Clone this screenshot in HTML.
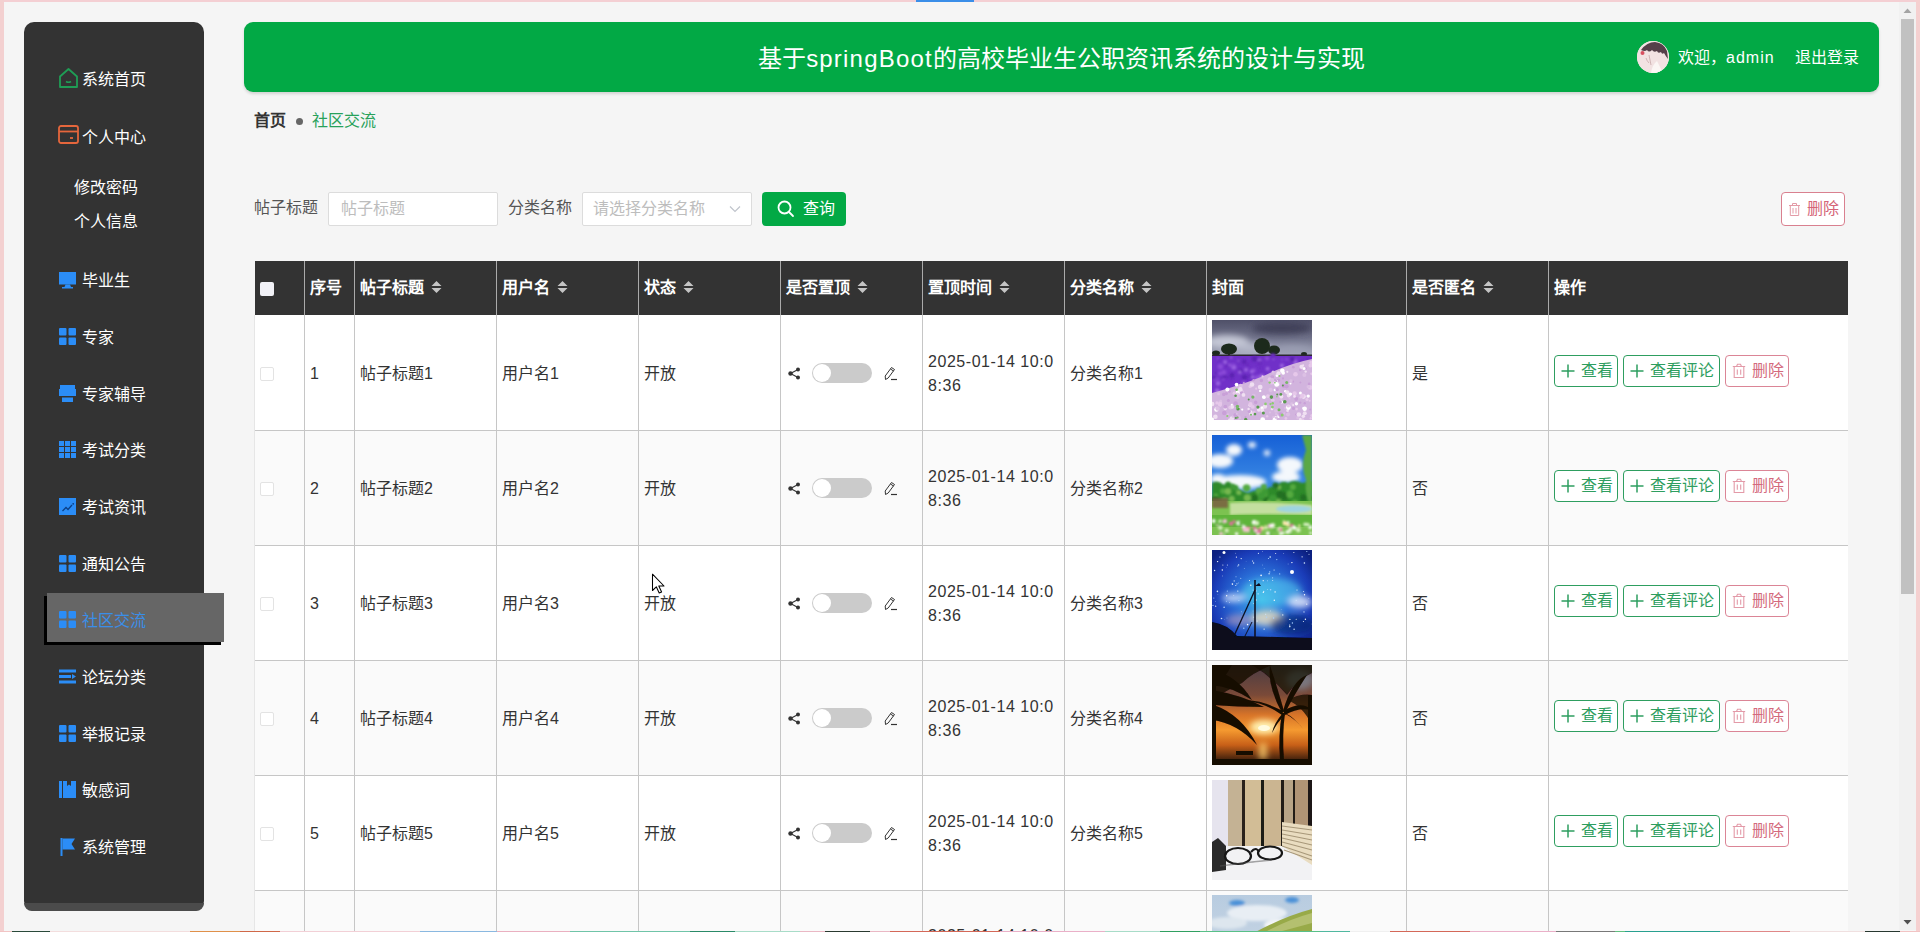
<!DOCTYPE html>
<html lang="zh-CN"><head><meta charset="utf-8">
<style>
*{box-sizing:border-box;margin:0;padding:0}
html,body{width:1920px;height:932px;overflow:hidden}
body{background:#f5f5f5;font-family:"Liberation Sans",sans-serif;font-size:16px;color:#333;position:relative}
.abs{position:absolute}
.frame-t{left:0;top:0;width:1920px;height:2px;background:#f4cfd3}
.frame-l{left:0;top:0;width:4px;height:932px;background:#f3d0d0}
.frame-r{left:1916px;top:0;width:4px;height:932px;background:#f5d0d0}
.frame-b{left:0;top:931px;width:1920px;height:1px;background:linear-gradient(to right,#f2c4c4 0px,#f2c4c4 12px,#2a4a3a 12px,#2a4a3a 50px,#f3dede 50px,#f3dede 190px,#e0904a 190px,#e0904a 240px,#d06848 240px,#d06848 280px,#f2d0d6 280px,#f2d0d6 420px,#8ab8e0 420px,#8ab8e0 497px,#eab0c0 497px,#eab0c0 570px,#70c4a8 570px,#70c4a8 690px,#2a8a68 690px,#2a8a68 735px,#a8dcc8 735px,#a8dcc8 800px,#eab8c4 800px,#eab8c4 825px,#2a3a30 825px,#2a3a30 870px,#eab8c4 870px,#eab8c4 890px,#d46858 890px,#d46858 1000px,#eab0c8 1000px,#eab0c8 1105px,#a8dcc8 1105px,#a8dcc8 1160px,#30a060 1160px,#30a060 1200px,#58c088 1200px,#58c088 1320px,#50b8a0 1320px,#50b8a0 1350px,#f0f0f0 1350px,#f0f0f0 1390px,#d46858 1390px,#d46858 1470px,#eab0c8 1470px,#eab0c8 1556px,#787878 1556px,#787878 1615px,#60c080 1615px,#60c080 1625px,#28a090 1625px,#28a090 1720px,#e08888 1720px,#e08888 1790px,#f0e0e0 1790px,#f0e0e0 1865px,#283830 1865px,#283830 1900px,#f2c4c4 1900px,#f2c4c4 1920px)}
#side{left:24px;top:22px;width:180px;height:889px;background:#333;border-radius:10px}
#side .bot{position:absolute;left:0;bottom:0;width:180px;height:8px;background:#4b4b4b;border-radius:0 0 10px 10px}
.mi{position:absolute;left:0;height:24px;line-height:24px;color:#fff;font-size:16px;white-space:nowrap}
.mi .ic{position:absolute;left:35px;top:3px;width:18px;height:18px}
.mi .tx{position:absolute;left:58px;top:1px}
.sub{position:absolute;left:50px;height:24px;line-height:24px;padding-top:1px;font-weight:500;color:#fff;font-size:16px;white-space:nowrap}
#active{left:23px;top:571px;width:177px;height:49px;background:#666;box-shadow:-3px 3px 0 #000}
#hdr{left:244px;top:22px;width:1635px;height:70px;background:#02a945;border-radius:9px;box-shadow:0 2px 3px rgba(0,0,0,.14)}
#hdr .title{position:absolute;left:0;width:1635px;top:2px;height:70px;line-height:70px;text-align:center;color:#fff;font-size:24px}

.avatar{left:1637px;top:41px;width:32px;height:32px;border-radius:50%;overflow:hidden;background:#f1e3e3}
.hw{left:1678px;top:46px;height:24px;line-height:24px;color:#fff;font-size:16px;white-space:nowrap}
.bc{top:109px;height:24px;line-height:24px;font-size:16px;white-space:nowrap}
.lbl{top:196px;height:24px;line-height:24px;font-size:16px;color:#555;white-space:nowrap}
.inp{top:192px;height:34px;background:#fff;border:1px solid #dcdcdc;border-radius:2px}
.ph{position:absolute;left:12px;top:4px;height:24px;line-height:24px;color:#bdbdbd;font-size:16px;white-space:nowrap}
.btn-q{left:762px;top:192px;width:84px;height:34px;background:#02a945;border-radius:4px;color:#fff}
.btn-d{left:1781px;top:192px;width:64px;height:34px;background:#fff;border:1px solid #d9808f;border-radius:4px;color:#d56477}
/*TCSS*/

.th{position:absolute;top:0;height:54px;line-height:54px;color:#fff;font-weight:bold;font-size:16px;white-space:nowrap}
.td{position:absolute;height:24px;line-height:24px;padding-top:1px;color:#333;font-size:16px;white-space:nowrap}
.sort{display:inline-block;vertical-align:top;margin-left:7px;margin-top:19px;width:11px;height:14px}
.ob{position:absolute;height:32px;border:1px solid #2e9e60;border-radius:4px;background:#fff;color:#2e9e60;font-size:16px;line-height:30px;white-space:nowrap}
.ob.del{border-color:#db8596;color:#d46a7d}

/*/TCSS*/
</style></head><body>
<div class="abs frame-t"></div>
<div class="abs frame-l"></div>
<div class="abs frame-r"></div>

<div id="side" class="abs">
  <div class="bot"></div>
<div id="active" class="abs"></div>
<div class="mi" style="top:45px"><svg class="ic" style="left:34px;top:0px;width:21px;height:22px" viewBox="0 0 21 22"><path d="M2 9.5 L10.5 2 L19 9.5 V20 H2 Z" fill="none" stroke="#1f9d55" stroke-width="1.8" stroke-linejoin="round"/><path d="M8 14.5 Q10.5 16 13 14.5" fill="none" stroke="#1f9d55" stroke-width="1.5"/></svg><span class="tx">系统首页</span></div>
<div class="mi" style="top:103px"><svg class="ic" style="left:34px;top:0px;width:21px;height:19px" viewBox="0 0 21 19"><rect x="1" y="1" width="19" height="17" rx="2" fill="none" stroke="#e5663c" stroke-width="1.8"/><path d="M1 6.5 H20" stroke="#e5663c" stroke-width="1.8"/><path d="M12 13 H15" stroke="#e5663c" stroke-width="1.8"/></svg><span class="tx">个人中心</span></div>
<div class="mi" style="top:246px"><svg class="ic" viewBox="0 0 18 18"><rect x="0" y="1" width="17" height="12.5" fill="#2b8df7"/><path d="M6.5 13.5 L5.5 16 H12 L11 13.5Z" fill="#2b8df7"/><rect x="3" y="16" width="11" height="1.5" fill="#2b8df7"/></svg><span class="tx">毕业生</span></div>
<div class="mi" style="top:303px"><svg class="ic" viewBox="0 0 18 18"><rect x="0" y="0" width="7.5" height="7.5" rx="1" fill="#2b8df7"/><rect x="9.5" y="0" width="7.5" height="7.5" rx="1" fill="#2b8df7"/><rect x="0" y="9.5" width="7.5" height="7.5" rx="1" fill="#2b8df7"/><rect x="9.5" y="9.5" width="7.5" height="7.5" rx="1" fill="#2b8df7"/></svg><span class="tx">专家</span></div>
<div class="mi" style="top:360px"><svg class="ic" viewBox="0 0 18 18"><path d="M1 0 H16 V11 H1Z" fill="#2b8df7"/><path d="M0 4 H17 V11 H0Z" fill="#2b8df7"/><rect x="3" y="12.5" width="11" height="4.5" fill="#2b8df7"/></svg><span class="tx">专家辅导</span></div>
<div class="mi" style="top:416px"><svg class="ic" viewBox="0 0 18 18"><g fill="#2b8df7"><rect x="0" y="0" width="5" height="5"/><rect x="6" y="0" width="5" height="5"/><rect x="12" y="0" width="5" height="5"/><rect x="0" y="6" width="5" height="5"/><rect x="6" y="6" width="5" height="5"/><rect x="12" y="6" width="5" height="5"/><rect x="0" y="12" width="5" height="5"/><rect x="6" y="12" width="5" height="5"/><rect x="12" y="12" width="5" height="5"/></g></svg><span class="tx">考试分类</span></div>
<div class="mi" style="top:473px"><svg class="ic" viewBox="0 0 18 18"><rect x="0" y="0" width="17" height="17" fill="#2b8df7"/><path d="M3.5 13 L7 9.5 L9 11.5 L13 7" fill="none" stroke="#0b3f86" stroke-width="1.3"/><circle cx="14.2" cy="5.8" r=".9" fill="#0b3f86"/></svg><span class="tx">考试资讯</span></div>
<div class="mi" style="top:530px"><svg class="ic" viewBox="0 0 18 18"><rect x="0" y="0" width="7.5" height="7.5" rx="1" fill="#2b8df7"/><rect x="9.5" y="0" width="7.5" height="7.5" rx="1" fill="#2b8df7"/><rect x="0" y="9.5" width="7.5" height="7.5" rx="1" fill="#2b8df7"/><rect x="9.5" y="9.5" width="7.5" height="7.5" rx="1" fill="#2b8df7"/></svg><span class="tx">通知公告</span></div>
<div class="mi" style="top:586px;color:#3a8ee8"><svg class="ic" viewBox="0 0 18 18"><rect x="0" y="0" width="7.5" height="7.5" rx="1" fill="#2b8df7"/><rect x="9.5" y="0" width="7.5" height="7.5" rx="1" fill="#2b8df7"/><rect x="0" y="9.5" width="7.5" height="7.5" rx="1" fill="#2b8df7"/><rect x="9.5" y="9.5" width="7.5" height="7.5" rx="1" fill="#2b8df7"/></svg><span class="tx">社区交流</span></div>
<div class="mi" style="top:643px"><svg class="ic" viewBox="0 0 18 18"><g fill="#2b8df7"><rect x="0" y="1.5" width="17" height="3"/><rect x="0" y="7" width="12" height="3"/><path d="M13 6 L17 8.5 L13 11Z"/><rect x="0" y="12.5" width="17" height="3"/></g></svg><span class="tx">论坛分类</span></div>
<div class="mi" style="top:700px"><svg class="ic" viewBox="0 0 18 18"><rect x="0" y="0" width="7.5" height="7.5" rx="1" fill="#2b8df7"/><rect x="9.5" y="0" width="7.5" height="7.5" rx="1" fill="#2b8df7"/><rect x="0" y="9.5" width="7.5" height="7.5" rx="1" fill="#2b8df7"/><rect x="9.5" y="9.5" width="7.5" height="7.5" rx="1" fill="#2b8df7"/></svg><span class="tx">举报记录</span></div>
<div class="mi" style="top:756px"><svg class="ic" viewBox="0 0 18 18"><g fill="#2b8df7"><rect x="0" y="0" width="3" height="17"/><path d="M4 0 H8 V5 L10 3.5 L12 5 V0 H17 V17 H4Z"/></g></svg><span class="tx">敏感词</span></div>
<div class="mi" style="top:813px"><svg class="ic" viewBox="0 0 18 18"><g fill="#2b8df7"><rect x="1.5" y="0" width="2" height="19"/><path d="M3.5 0.5 H16 L12.5 6 L16 11.5 H3.5Z"/></g></svg><span class="tx">系统管理</span></div>
<div class="sub" style="top:153px">修改密码</div>
<div class="sub" style="top:187px">个人信息</div>
</div>

<div id="hdr" class="abs">
  <div class="title">基于<span style="letter-spacing:1.2px">springBoot</span>的高校毕业生公职资讯系统的设计与实现</div>
</div>


<div class="abs avatar"><svg width="32" height="32" viewBox="0 0 32 32"><defs><filter id="avb"><feGaussianBlur stdDeviation=".6"/></filter></defs><rect width="32" height="32" fill="#f2e2e2"/><g filter="url(#avb)"><path d="M4 9 Q10 1 18 1 Q27 2 30 10 L31 18 Q28 14 27 12 Q25 14 24 11 Q21 13 20 10 Q17 12 15 9 Q12 12 10 9 Q8 11 4 9Z" fill="#54404a"/><circle cx="5.5" cy="12" r="2" fill="#d85060"/><path d="M12 14 L14 24 M9 17 Q10 20 12 22" stroke="#c8a8a8" stroke-width=".8" fill="none"/><path d="M14 32 Q15 24 20 20 L26 32Z" fill="#fbf6f4"/></g></svg></div>
<div class="abs hw">欢迎，<span style="letter-spacing:1px">admin</span></div>
<div class="abs hw" style="left:1795px">退出登录</div>

<div class="abs bc" style="left:254px;color:#333;font-weight:bold">首页</div>
<div class="abs" style="left:296px;top:118px;width:7px;height:7px;border-radius:50%;background:#666"></div>
<div class="abs bc" style="left:312px;color:#27a15a">社区交流</div>

<div class="abs lbl" style="left:254px">帖子标题</div>
<div class="abs inp" style="left:328px;width:170px"><span class="ph">帖子标题</span></div>
<div class="abs lbl" style="left:508px">分类名称</div>
<div class="abs inp" style="left:582px;width:170px"><span class="ph" style="left:10px">请选择分类名称</span>
<svg class="abs" style="left:146px;top:11px" width="12" height="10" viewBox="0 0 12 10"><path d="M1 2.5 L6 7.5 L11 2.5" fill="none" stroke="#c0c4cc" stroke-width="1.2"/></svg></div>
<div class="abs btn-q"><svg class="abs" style="left:15px;top:8px" width="18" height="18" viewBox="0 0 18 18"><circle cx="7.5" cy="7.5" r="6" fill="none" stroke="#fff" stroke-width="1.8"/><path d="M12 12 L16 16" stroke="#fff" stroke-width="1.8" stroke-linecap="round"/></svg><span class="abs" style="left:41px;top:5px;line-height:24px">查询</span></div>
<div class="abs btn-d"><svg class="abs" style="left:6px;top:9px" width="13" height="15" viewBox="0 0 13 15"><path d="M1 3.5 H12 M4.5 3.5 V1.5 H8.5 V3.5 M2.3 3.5 V13.5 H10.7 V3.5 M5 6 V11.5 M8 6 V11.5" fill="none" stroke="#e39aa6" stroke-width="1"/></svg><span class="abs" style="left:25px;top:4px;line-height:24px">删除</span></div>
<!--TABLE-->
<div class="abs" id="tbl" style="left:254px;top:261px;width:1594px;height:671px;overflow:hidden">
<div class="abs" style="left:1px;top:0;width:1593px;height:54px;background:#333"></div>
<div class="abs" style="left:0;top:54px;width:1px;height:620px;background:#e6e6e6"></div>
<div class="abs" style="left:1px;top:54px;width:1593px;height:115px;background:#fff"></div>
<div class="abs" style="left:1px;top:169px;width:1593px;height:115px;background:#fafafa"></div>
<div class="abs" style="left:1px;top:284px;width:1593px;height:115px;background:#fff"></div>
<div class="abs" style="left:1px;top:399px;width:1593px;height:115px;background:#fafafa"></div>
<div class="abs" style="left:1px;top:514px;width:1593px;height:115px;background:#fff"></div>
<div class="abs" style="left:1px;top:629px;width:1593px;height:115px;background:#fafafa"></div>
<div class="abs" style="left:1px;top:169px;width:1593px;height:1px;background:#c6c6c6"></div>
<div class="abs" style="left:1px;top:284px;width:1593px;height:1px;background:#c6c6c6"></div>
<div class="abs" style="left:1px;top:399px;width:1593px;height:1px;background:#c6c6c6"></div>
<div class="abs" style="left:1px;top:514px;width:1593px;height:1px;background:#c6c6c6"></div>
<div class="abs" style="left:1px;top:629px;width:1593px;height:1px;background:#c6c6c6"></div>
<div class="abs" style="left:1px;top:744px;width:1593px;height:1px;background:#c6c6c6"></div>
<div class="abs" style="left:50px;top:0;width:1px;height:54px;background:#aaa"></div>
<div class="abs" style="left:50px;top:54px;width:1px;height:620px;background:#c6c6c6"></div>
<div class="abs" style="left:100px;top:0;width:1px;height:54px;background:#aaa"></div>
<div class="abs" style="left:100px;top:54px;width:1px;height:620px;background:#c6c6c6"></div>
<div class="abs" style="left:242px;top:0;width:1px;height:54px;background:#aaa"></div>
<div class="abs" style="left:242px;top:54px;width:1px;height:620px;background:#c6c6c6"></div>
<div class="abs" style="left:384px;top:0;width:1px;height:54px;background:#aaa"></div>
<div class="abs" style="left:384px;top:54px;width:1px;height:620px;background:#c6c6c6"></div>
<div class="abs" style="left:526px;top:0;width:1px;height:54px;background:#aaa"></div>
<div class="abs" style="left:526px;top:54px;width:1px;height:620px;background:#c6c6c6"></div>
<div class="abs" style="left:668px;top:0;width:1px;height:54px;background:#aaa"></div>
<div class="abs" style="left:668px;top:54px;width:1px;height:620px;background:#c6c6c6"></div>
<div class="abs" style="left:810px;top:0;width:1px;height:54px;background:#aaa"></div>
<div class="abs" style="left:810px;top:54px;width:1px;height:620px;background:#c6c6c6"></div>
<div class="abs" style="left:952px;top:0;width:1px;height:54px;background:#aaa"></div>
<div class="abs" style="left:952px;top:54px;width:1px;height:620px;background:#c6c6c6"></div>
<div class="abs" style="left:1152px;top:0;width:1px;height:54px;background:#aaa"></div>
<div class="abs" style="left:1152px;top:54px;width:1px;height:620px;background:#c6c6c6"></div>
<div class="abs" style="left:1294px;top:0;width:1px;height:54px;background:#aaa"></div>
<div class="abs" style="left:1294px;top:54px;width:1px;height:620px;background:#c6c6c6"></div>
<div class="abs" style="left:6px;top:21px;width:14px;height:14px;background:#f2f2f7;border-radius:2px"></div>
<div class="th" style="left:56px">序号</div>
<div class="th" style="left:106px">帖子标题<svg class="sort" viewBox="0 0 11 14"><path d="M5.5 1 L10.5 6 H0.5Z M5.5 13 L10.5 8 H0.5Z" fill="#c4c4c4"/></svg></div>
<div class="th" style="left:248px">用户名<svg class="sort" viewBox="0 0 11 14"><path d="M5.5 1 L10.5 6 H0.5Z M5.5 13 L10.5 8 H0.5Z" fill="#c4c4c4"/></svg></div>
<div class="th" style="left:390px">状态<svg class="sort" viewBox="0 0 11 14"><path d="M5.5 1 L10.5 6 H0.5Z M5.5 13 L10.5 8 H0.5Z" fill="#c4c4c4"/></svg></div>
<div class="th" style="left:532px">是否置顶<svg class="sort" viewBox="0 0 11 14"><path d="M5.5 1 L10.5 6 H0.5Z M5.5 13 L10.5 8 H0.5Z" fill="#c4c4c4"/></svg></div>
<div class="th" style="left:674px">置顶时间<svg class="sort" viewBox="0 0 11 14"><path d="M5.5 1 L10.5 6 H0.5Z M5.5 13 L10.5 8 H0.5Z" fill="#c4c4c4"/></svg></div>
<div class="th" style="left:816px">分类名称<svg class="sort" viewBox="0 0 11 14"><path d="M5.5 1 L10.5 6 H0.5Z M5.5 13 L10.5 8 H0.5Z" fill="#c4c4c4"/></svg></div>
<div class="th" style="left:958px">封面</div>
<div class="th" style="left:1158px">是否匿名<svg class="sort" viewBox="0 0 11 14"><path d="M5.5 1 L10.5 6 H0.5Z M5.5 13 L10.5 8 H0.5Z" fill="#c4c4c4"/></svg></div>
<div class="th" style="left:1300px">操作</div>
<div class="abs" style="left:6px;top:106px;width:14px;height:14px;border:1px solid #e3e3e3;border-radius:2px;background:#fff"></div>
<div class="td" style="left:56px;top:100px">1</div>
<div class="td" style="left:106px;top:100px">帖子标题1</div>
<div class="td" style="left:248px;top:100px">用户名1</div>
<div class="td" style="left:390px;top:100px">开放</div>
<svg class="abs" style="left:534px;top:106px" width="13" height="13" viewBox="0 0 13 13"><path d="M2.5 6.5 L10 2.5 M2.5 6.5 L10 10.5" stroke="#333" stroke-width="1.1"/><circle cx="2.5" cy="6.5" r="2.2" fill="#333"/><circle cx="10" cy="2.5" r="2" fill="#333"/><circle cx="10" cy="10.5" r="2" fill="#333"/></svg>
<div class="abs" style="left:558px;top:102px;width:60px;height:20px;border-radius:10px;background:#cbcbcb"></div>
<div class="abs" style="left:559px;top:103px;width:18px;height:18px;border-radius:50%;background:#fff"></div>
<svg class="abs" style="left:630px;top:105px" width="14" height="15" viewBox="0 0 14 15"><path d="M1.5 13.5 L1.2 10 L7.5 1.5 L10.5 3.5 L4.2 12 Z M6.5 3 L9.5 5" fill="none" stroke="#333" stroke-width="1"/><path d="M7 13.5 H13" stroke="#333" stroke-width="1.2"/></svg>
<div class="td" style="left:674px;top:88px;line-height:24px;height:48px;letter-spacing:.55px">2025-01-14 10:0<br>8:36</div>
<div class="td" style="left:816px;top:100px">分类名称1</div>
<div class="abs thumb t1" style="left:958px;top:59px;width:100px;height:100px"><svg width="100" height="100" viewBox="0 0 100 100"><defs><linearGradient id="g1s" x1="0" y1="0" x2="0" y2="1"><stop offset="0" stop-color="#4f5068"/><stop offset=".5" stop-color="#6f7189"/><stop offset="1" stop-color="#a9adc0"/></linearGradient><filter id="f1a" x="-100%" y="-100%" width="300%" height="300%"><feGaussianBlur stdDeviation="3"/></filter><filter id="f1b" x="-100%" y="-100%" width="300%" height="300%"><feGaussianBlur stdDeviation="1"/></filter><filter id="f1c" x="-100%" y="-100%" width="300%" height="300%"><feGaussianBlur stdDeviation=".5"/></filter></defs><rect width="100" height="36" fill="url(#g1s)"/><g filter="url(#f1a)"><ellipse cx="15" cy="22" rx="22" ry="7" fill="#c5c8d6"/><ellipse cx="40" cy="28" rx="20" ry="5" fill="#b6b9ca"/><ellipse cx="80" cy="30" rx="18" ry="4" fill="#9a9db2"/><ellipse cx="70" cy="8" rx="30" ry="6" fill="#3f4058"/></g><g fill="#1f2b1c" filter="url(#f1c)"><ellipse cx="17" cy="29" rx="8" ry="5.5"/><rect x="16" y="30" width="2" height="5"/><ellipse cx="50" cy="26" rx="8" ry="8"/><ellipse cx="62" cy="30" rx="6" ry="4.5"/><ellipse cx="4" cy="33" rx="4" ry="2.5"/><ellipse cx="92" cy="34" rx="3" ry="2"/></g><rect x="0" y="34.5" width="100" height="1.5" fill="#2b2630"/><rect x="0" y="36" width="100" height="64" fill="#7030c8"/><g filter="url(#f1b)"><circle cx="32.4" cy="41.9" r="2.3" fill="#5a22b0" opacity="1"/><circle cx="82.1" cy="39.7" r="2.2" fill="#8a4ad8" opacity="1"/><circle cx="3.7" cy="52.9" r="1.1" fill="#5a22b0" opacity="1"/><circle cx="55.1" cy="38.3" r="2.1" fill="#8a4ad8" opacity="1"/><circle cx="6.2" cy="58.8" r="1.1" fill="#8a4ad8" opacity="1"/><circle cx="4.7" cy="69.5" r="1.6" fill="#8a4ad8" opacity="1"/><circle cx="10.3" cy="58.3" r="1.4" fill="#5a22b0" opacity="1"/><circle cx="54.8" cy="38.4" r="1.1" fill="#8a4ad8" opacity="1"/><circle cx="49.6" cy="56.7" r="2.6" fill="#9a62e0" opacity="1"/><circle cx="58.6" cy="53.7" r="1.6" fill="#8a4ad8" opacity="1"/><circle cx="69.9" cy="45.5" r="2.1" fill="#9a62e0" opacity="1"/><circle cx="11.8" cy="52.3" r="2.5" fill="#8a4ad8" opacity="1"/><circle cx="96.2" cy="39.0" r="2.1" fill="#6a2ac0" opacity="1"/><circle cx="34.0" cy="49.7" r="2.0" fill="#9a62e0" opacity="1"/><circle cx="6.9" cy="39.7" r="1.5" fill="#5a22b0" opacity="1"/><circle cx="6.1" cy="63.4" r="2.3" fill="#9a62e0" opacity="1"/><circle cx="28.5" cy="51.0" r="2.3" fill="#5a22b0" opacity="1"/><circle cx="21.8" cy="47.2" r="2.5" fill="#9a62e0" opacity="1"/><circle cx="8.1" cy="53.5" r="2.1" fill="#8a4ad8" opacity="1"/><circle cx="27.8" cy="52.2" r="1.7" fill="#9a62e0" opacity="1"/><circle cx="17.6" cy="45.0" r="1.5" fill="#9a62e0" opacity="1"/><circle cx="83.1" cy="43.1" r="1.6" fill="#8a4ad8" opacity="1"/><circle cx="41.9" cy="50.4" r="2.1" fill="#8a4ad8" opacity="1"/><circle cx="5.4" cy="71.1" r="2.6" fill="#9a62e0" opacity="1"/><circle cx="39.8" cy="51.4" r="2.0" fill="#9a62e0" opacity="1"/><circle cx="6.2" cy="38.6" r="1.4" fill="#8a4ad8" opacity="1"/><circle cx="11.0" cy="59.4" r="1.2" fill="#8a4ad8" opacity="1"/><circle cx="61.4" cy="38.7" r="1.4" fill="#9a62e0" opacity="1"/><circle cx="14.9" cy="45.8" r="1.7" fill="#6a2ac0" opacity="1"/><circle cx="47.4" cy="40.5" r="2.0" fill="#9a62e0" opacity="1"/><circle cx="48.0" cy="48.2" r="1.3" fill="#6a2ac0" opacity="1"/><circle cx="29.8" cy="61.1" r="1.2" fill="#6a2ac0" opacity="1"/><circle cx="35.6" cy="44.7" r="2.1" fill="#6a2ac0" opacity="1"/><circle cx="19.5" cy="45.3" r="1.8" fill="#8a4ad8" opacity="1"/><circle cx="20.0" cy="55.2" r="2.5" fill="#5a22b0" opacity="1"/><circle cx="19.4" cy="59.6" r="1.7" fill="#6a2ac0" opacity="1"/><circle cx="22.0" cy="44.8" r="1.4" fill="#8a4ad8" opacity="1"/><circle cx="61.0" cy="36.1" r="2.8" fill="#6a2ac0" opacity="1"/><circle cx="80.0" cy="39.3" r="2.3" fill="#9a62e0" opacity="1"/><circle cx="47.8" cy="43.0" r="2.6" fill="#6a2ac0" opacity="1"/><circle cx="74.3" cy="39.3" r="1.3" fill="#8a4ad8" opacity="1"/><circle cx="2.8" cy="59.0" r="1.9" fill="#8a4ad8" opacity="1"/><circle cx="15.6" cy="57.4" r="1.0" fill="#5a22b0" opacity="1"/><circle cx="82.6" cy="44.2" r="1.5" fill="#6a2ac0" opacity="1"/><circle cx="32.6" cy="57.2" r="2.7" fill="#5a22b0" opacity="1"/><circle cx="45.8" cy="58.8" r="2.8" fill="#9a62e0" opacity="1"/><circle cx="13.1" cy="41.9" r="2.0" fill="#9a62e0" opacity="1"/><circle cx="77.6" cy="41.8" r="1.3" fill="#5a22b0" opacity="1"/><circle cx="55.6" cy="48.7" r="2.0" fill="#9a62e0" opacity="1"/><circle cx="78.4" cy="40.1" r="2.1" fill="#8a4ad8" opacity="1"/><circle cx="19.1" cy="37.6" r="1.2" fill="#9a62e0" opacity="1"/><circle cx="45.2" cy="56.8" r="2.0" fill="#8a4ad8" opacity="1"/><circle cx="84.0" cy="41.3" r="1.2" fill="#9a62e0" opacity="1"/><circle cx="31.6" cy="62.2" r="1.9" fill="#8a4ad8" opacity="1"/><circle cx="89.7" cy="42.0" r="2.4" fill="#6a2ac0" opacity="1"/><circle cx="83.2" cy="42.3" r="1.9" fill="#9a62e0" opacity="1"/><circle cx="33.9" cy="43.6" r="1.6" fill="#6a2ac0" opacity="1"/><circle cx="1.9" cy="57.6" r="1.9" fill="#5a22b0" opacity="1"/><circle cx="38.4" cy="56.2" r="1.6" fill="#5a22b0" opacity="1"/><circle cx="8.4" cy="46.6" r="2.8" fill="#8a4ad8" opacity="1"/><circle cx="27.0" cy="41.1" r="1.8" fill="#6a2ac0" opacity="1"/><circle cx="40.6" cy="56.9" r="2.0" fill="#9a62e0" opacity="1"/><circle cx="70.0" cy="39.5" r="1.1" fill="#8a4ad8" opacity="1"/><circle cx="42.5" cy="38.8" r="2.9" fill="#5a22b0" opacity="1"/><circle cx="80.2" cy="39.3" r="2.7" fill="#5a22b0" opacity="1"/><circle cx="26.4" cy="40.7" r="1.0" fill="#9a62e0" opacity="1"/><circle cx="12.9" cy="56.5" r="1.5" fill="#5a22b0" opacity="1"/></g><path d="M0 73 Q40 62 60 52 Q80 43 100 39 V100 H0Z" fill="#d2b4de"/><g filter="url(#f1c)"><circle cx="62.9" cy="70.0" r="1.3" fill="#ffffff" opacity="1"/><circle cx="73.3" cy="71.3" r="1.3" fill="#ffffff" opacity="1"/><circle cx="24.6" cy="64.6" r="1.9" fill="#ffffff" opacity="1"/><circle cx="65.7" cy="70.9" r="2.2" fill="#dcc0e4" opacity="1"/><circle cx="88.2" cy="82.6" r="1.2" fill="#c9a0d8" opacity="1"/><circle cx="98.2" cy="89.6" r="1.0" fill="#c9a0d8" opacity="1"/><circle cx="66.5" cy="60.4" r="1.7" fill="#c9a0d8" opacity="1"/><circle cx="59.9" cy="80.3" r="1.1" fill="#e6c8ea" opacity="1"/><circle cx="26.3" cy="97.6" r="2.4" fill="#dcc0e4" opacity="1"/><circle cx="88.2" cy="49.9" r="1.3" fill="#c9a0d8" opacity="1"/><circle cx="38.2" cy="66.4" r="1.7" fill="#e6c8ea" opacity="1"/><circle cx="24.8" cy="85.7" r="1.1" fill="#f0e0f2" opacity="1"/><circle cx="14.4" cy="73.6" r="1.6" fill="#c9a0d8" opacity="1"/><circle cx="58.6" cy="69.9" r="2.1" fill="#dcc0e4" opacity="1"/><circle cx="98.5" cy="45.6" r="2.0" fill="#e6c8ea" opacity="1"/><circle cx="4.4" cy="89.5" r="2.2" fill="#ffffff" opacity="1"/><circle cx="73.4" cy="88.0" r="1.2" fill="#dcc0e4" opacity="1"/><circle cx="75.3" cy="72.4" r="2.1" fill="#f0e0f2" opacity="1"/><circle cx="82.6" cy="73.4" r="2.2" fill="#e6c8ea" opacity="1"/><circle cx="63.7" cy="97.4" r="1.5" fill="#ffffff" opacity="1"/><circle cx="55.9" cy="76.2" r="1.9" fill="#e6c8ea" opacity="1"/><circle cx="79.8" cy="83.9" r="1.7" fill="#dcc0e4" opacity="1"/><circle cx="74.6" cy="66.3" r="2.1" fill="#c9a0d8" opacity="1"/><circle cx="23.5" cy="84.4" r="1.3" fill="#ffffff" opacity="1"/><circle cx="49.4" cy="60.5" r="1.7" fill="#c9a0d8" opacity="1"/><circle cx="76.7" cy="75.5" r="1.9" fill="#f0e0f2" opacity="1"/><circle cx="60.0" cy="57.2" r="1.9" fill="#c9a0d8" opacity="1"/><circle cx="48.2" cy="67.1" r="2.4" fill="#f0e0f2" opacity="1"/><circle cx="69.2" cy="79.2" r="1.4" fill="#dcc0e4" opacity="1"/><circle cx="28.6" cy="65.8" r="2.1" fill="#dcc0e4" opacity="1"/><circle cx="19.9" cy="98.6" r="2.3" fill="#f0e0f2" opacity="1"/><circle cx="50.7" cy="99.7" r="2.4" fill="#ffffff" opacity="1"/><circle cx="21.0" cy="96.5" r="1.3" fill="#dcc0e4" opacity="1"/><circle cx="9.0" cy="83.8" r="1.4" fill="#c9a0d8" opacity="1"/><circle cx="13.3" cy="88.5" r="1.7" fill="#f0e0f2" opacity="1"/><circle cx="70.3" cy="50.8" r="2.3" fill="#ffffff" opacity="1"/><circle cx="95.0" cy="79.6" r="1.6" fill="#e6c8ea" opacity="1"/><circle cx="41.6" cy="60.1" r="1.2" fill="#c9a0d8" opacity="1"/><circle cx="0.2" cy="84.0" r="2.2" fill="#f0e0f2" opacity="1"/><circle cx="94.0" cy="48.5" r="1.0" fill="#c9a0d8" opacity="1"/><circle cx="39.0" cy="91.7" r="1.1" fill="#ffffff" opacity="1"/><circle cx="75.6" cy="90.7" r="1.4" fill="#f0e0f2" opacity="1"/><circle cx="83.5" cy="54.3" r="2.3" fill="#e6c8ea" opacity="1"/><circle cx="97.1" cy="63.9" r="1.4" fill="#c9a0d8" opacity="1"/><circle cx="78.5" cy="63.4" r="1.0" fill="#ffffff" opacity="1"/><circle cx="91.3" cy="96.2" r="1.8" fill="#f0e0f2" opacity="1"/><circle cx="4.9" cy="82.9" r="1.6" fill="#e6c8ea" opacity="1"/><circle cx="64.4" cy="54.3" r="1.1" fill="#dcc0e4" opacity="1"/><circle cx="73.9" cy="98.5" r="1.4" fill="#e6c8ea" opacity="1"/><circle cx="30.1" cy="71.7" r="1.6" fill="#e6c8ea" opacity="1"/><circle cx="50.1" cy="88.0" r="1.8" fill="#ffffff" opacity="1"/><circle cx="90.6" cy="99.8" r="1.6" fill="#e6c8ea" opacity="1"/><circle cx="17.5" cy="71.6" r="1.4" fill="#c9a0d8" opacity="1"/><circle cx="25.8" cy="72.5" r="2.2" fill="#ffffff" opacity="1"/><circle cx="38.3" cy="83.7" r="1.3" fill="#c9a0d8" opacity="1"/><circle cx="27.8" cy="97.9" r="1.2" fill="#dcc0e4" opacity="1"/><circle cx="52.9" cy="86.6" r="2.2" fill="#f0e0f2" opacity="1"/><circle cx="40.0" cy="64.5" r="2.3" fill="#f0e0f2" opacity="1"/><circle cx="76.4" cy="87.5" r="2.4" fill="#ffffff" opacity="1"/><circle cx="92.7" cy="88.8" r="2.2" fill="#ffffff" opacity="1"/><circle cx="15.4" cy="69.4" r="2.0" fill="#ffffff" opacity="1"/><circle cx="8.5" cy="85.7" r="1.0" fill="#e6c8ea" opacity="1"/><circle cx="23.3" cy="94.9" r="1.9" fill="#c9a0d8" opacity="1"/><circle cx="96.2" cy="76.1" r="1.7" fill="#ffffff" opacity="1"/><circle cx="58.3" cy="60.8" r="1.3" fill="#dcc0e4" opacity="1"/><circle cx="99.6" cy="53.8" r="1.4" fill="#e6c8ea" opacity="1"/><circle cx="24.7" cy="97.5" r="2.0" fill="#c9a0d8" opacity="1"/><circle cx="88.5" cy="77.4" r="1.1" fill="#e6c8ea" opacity="1"/><circle cx="66.7" cy="95.2" r="1.3" fill="#f0e0f2" opacity="1"/><circle cx="69.6" cy="82.0" r="1.5" fill="#ffffff" opacity="1"/><circle cx="19.8" cy="87.0" r="2.0" fill="#dcc0e4" opacity="1"/><circle cx="20.0" cy="85.0" r="1.3" fill="#ffffff" opacity="1"/><circle cx="22.1" cy="84.7" r="1.4" fill="#dcc0e4" opacity="1"/><circle cx="66.5" cy="96.7" r="1.2" fill="#ffffff" opacity="1"/><circle cx="59.6" cy="62.6" r="2.0" fill="#e6c8ea" opacity="1"/><circle cx="39.3" cy="93.5" r="2.2" fill="#f0e0f2" opacity="1"/><circle cx="99.8" cy="95.6" r="1.5" fill="#e6c8ea" opacity="1"/><circle cx="65.2" cy="69.6" r="1.7" fill="#c9a0d8" opacity="1"/><circle cx="66.4" cy="60.2" r="1.5" fill="#c9a0d8" opacity="1"/><circle cx="42.0" cy="92.7" r="1.8" fill="#e6c8ea" opacity="1"/><circle cx="38.0" cy="85.2" r="1.4" fill="#ffffff" opacity="1"/><circle cx="8.8" cy="81.1" r="1.3" fill="#dcc0e4" opacity="1"/><circle cx="92.0" cy="48.4" r="1.5" fill="#ffffff" opacity="1"/><circle cx="81.2" cy="85.1" r="1.1" fill="#f0e0f2" opacity="1"/><circle cx="46.4" cy="87.4" r="1.1" fill="#e6c8ea" opacity="1"/><circle cx="74.7" cy="93.5" r="1.5" fill="#c9a0d8" opacity="1"/><circle cx="33.5" cy="97.0" r="1.1" fill="#c9a0d8" opacity="1"/><circle cx="92.4" cy="55.0" r="2.0" fill="#dcc0e4" opacity="1"/><circle cx="91.6" cy="76.6" r="2.3" fill="#f0e0f2" opacity="1"/><circle cx="71.6" cy="65.8" r="2.1" fill="#c9a0d8" opacity="1"/><circle cx="91.4" cy="88.1" r="1.2" fill="#ffffff" opacity="1"/><circle cx="18.3" cy="87.4" r="2.0" fill="#e6c8ea" opacity="1"/><circle cx="60.7" cy="57.0" r="1.4" fill="#c9a0d8" opacity="1"/><circle cx="78.4" cy="74.1" r="1.7" fill="#ffffff" opacity="1"/><circle cx="75.3" cy="51.8" r="1.1" fill="#f0e0f2" opacity="1"/><circle cx="48.2" cy="70.9" r="1.2" fill="#ffffff" opacity="1"/><circle cx="88.3" cy="99.2" r="1.4" fill="#f0e0f2" opacity="1"/><circle cx="98.8" cy="98.2" r="1.2" fill="#e6c8ea" opacity="1"/><circle cx="41.7" cy="75.7" r="1.9" fill="#dcc0e4" opacity="1"/><circle cx="84.7" cy="78.5" r="1.2" fill="#c9a0d8" opacity="1"/><circle cx="29.4" cy="72.3" r="1.5" fill="#c9a0d8" opacity="1"/><circle cx="88.4" cy="73.0" r="1.5" fill="#ffffff" opacity="1"/><circle cx="52.6" cy="77.6" r="1.1" fill="#ffffff" opacity="1"/><circle cx="99.1" cy="42.5" r="1.7" fill="#e6c8ea" opacity="1"/><circle cx="84.1" cy="94.5" r="1.1" fill="#c9a0d8" opacity="1"/><circle cx="60.0" cy="89.0" r="1.3" fill="#f0e0f2" opacity="1"/><circle cx="37.2" cy="91.4" r="1.6" fill="#c9a0d8" opacity="1"/><circle cx="77.5" cy="78.5" r="1.0" fill="#dcc0e4" opacity="1"/><circle cx="71.0" cy="58.4" r="1.1" fill="#c9a0d8" opacity="1"/><circle cx="25.5" cy="74.4" r="1.9" fill="#e6c8ea" opacity="1"/><circle cx="81.5" cy="88.4" r="1.6" fill="#c9a0d8" opacity="1"/><circle cx="20.3" cy="86.9" r="1.8" fill="#f0e0f2" opacity="1"/><circle cx="40.8" cy="86.9" r="1.9" fill="#e6c8ea" opacity="1"/><circle cx="16.4" cy="80.5" r="1.6" fill="#c9a0d8" opacity="1"/><circle cx="66.8" cy="62.7" r="1.1" fill="#dcc0e4" opacity="1"/><circle cx="88.4" cy="62.5" r="1.0" fill="#c9a0d8" opacity="1"/><circle cx="64.4" cy="61.0" r="1.6" fill="#f0e0f2" opacity="1"/><circle cx="57.8" cy="59.3" r="2.1" fill="#e6c8ea" opacity="1"/><circle cx="64.1" cy="94.2" r="1.1" fill="#dcc0e4" opacity="1"/><circle cx="92.7" cy="83.2" r="1.2" fill="#c9a0d8" opacity="1"/><circle cx="28.3" cy="69.4" r="2.3" fill="#f0e0f2" opacity="1"/><circle cx="38.4" cy="84.2" r="2.1" fill="#e6c8ea" opacity="1"/><circle cx="30.2" cy="89.6" r="1.1" fill="#ffffff" opacity="1"/><circle cx="31.5" cy="74.9" r="1.9" fill="#f0e0f2" opacity="1"/><circle cx="90.4" cy="75.7" r="2.2" fill="#e6c8ea" opacity="1"/><circle cx="64.0" cy="90.8" r="1.9" fill="#dcc0e4" opacity="1"/><circle cx="84.6" cy="89.1" r="1.3" fill="#e6c8ea" opacity="1"/><circle cx="4.2" cy="96.1" r="1.2" fill="#c9a0d8" opacity="1"/><circle cx="72.5" cy="93.4" r="1.1" fill="#dcc0e4" opacity="1"/><circle cx="84.2" cy="79.0" r="1.9" fill="#c9a0d8" opacity="1"/><circle cx="11.8" cy="74.4" r="1.8" fill="#c9a0d8" opacity="1"/><circle cx="64.9" cy="55.7" r="1.3" fill="#ffffff" opacity="1"/><circle cx="65.9" cy="64.6" r="1.6" fill="#f0e0f2" opacity="1"/><circle cx="0.4" cy="99.1" r="1.7" fill="#ffffff" opacity="1"/><circle cx="76.4" cy="85.9" r="1.6" fill="#e6c8ea" opacity="1"/><circle cx="81.1" cy="61.6" r="1.1" fill="#c9a0d8" opacity="1"/><circle cx="44.2" cy="68.7" r="1.1" fill="#e6c8ea" opacity="1"/><circle cx="8.2" cy="82.9" r="2.1" fill="#dcc0e4" opacity="1"/><circle cx="8.0" cy="84.1" r="2.3" fill="#e6c8ea" opacity="1"/><circle cx="61.4" cy="80.3" r="1.2" fill="#e6c8ea" opacity="1"/><circle cx="98.2" cy="67.5" r="2.3" fill="#e6c8ea" opacity="1"/><circle cx="68.6" cy="82.1" r="1.3" fill="#c9a0d8" opacity="1"/><circle cx="61.0" cy="52.1" r="1.5" fill="#dcc0e4" opacity="1"/><circle cx="27.5" cy="88.2" r="1.2" fill="#dcc0e4" opacity="1"/><circle cx="96.4" cy="66.7" r="1.8" fill="#dcc0e4" opacity="1"/><circle cx="50.6" cy="56.4" r="1.1" fill="#e6c8ea" opacity="1"/><circle cx="40.3" cy="76.7" r="1.4" fill="#c9a0d8" opacity="1"/><circle cx="89.5" cy="46.8" r="2.1" fill="#f0e0f2" opacity="1"/><circle cx="85.8" cy="97.8" r="1.6" fill="#dcc0e4" opacity="1"/><circle cx="58.0" cy="92.5" r="1.1" fill="#dcc0e4" opacity="1"/><circle cx="63.0" cy="61.2" r="2.1" fill="#c9a0d8" opacity="1"/><circle cx="61.5" cy="97.3" r="1.4" fill="#dcc0e4" opacity="1"/><circle cx="25.4" cy="76.9" r="2.4" fill="#dcc0e4" opacity="1"/><circle cx="92.8" cy="93.3" r="2.0" fill="#f0e0f2" opacity="1"/><circle cx="62.6" cy="62.7" r="1.5" fill="#f0e0f2" opacity="1"/><circle cx="22.4" cy="73.3" r="1.8" fill="#e6c8ea" opacity="1"/><circle cx="36.6" cy="89.0" r="1.2" fill="#f0e0f2" opacity="1"/><circle cx="93.7" cy="51.6" r="1.2" fill="#f0e0f2" opacity="1"/><circle cx="66.5" cy="53.3" r="2.1" fill="#f0e0f2" opacity="1"/><circle cx="5.6" cy="88.5" r="2.2" fill="#dcc0e4" opacity="1"/><circle cx="64.6" cy="64.4" r="2.3" fill="#ffffff" opacity="1"/><circle cx="24.8" cy="93.8" r="1.1" fill="#dcc0e4" opacity="1"/><circle cx="15.9" cy="94.4" r="1.1" fill="#dcc0e4" opacity="1"/><circle cx="55.1" cy="96.2" r="1.2" fill="#e6c8ea" opacity="1"/><circle cx="51.8" cy="77.1" r="1.9" fill="#ffffff" opacity="1"/><circle cx="81.3" cy="47.2" r="1.4" fill="#c9a0d8" opacity="1"/><circle cx="62.6" cy="99.6" r="2.0" fill="#ffffff" opacity="1"/><circle cx="84.4" cy="83.7" r="1.7" fill="#ffffff" opacity="1"/><circle cx="17.5" cy="99.8" r="1.4" fill="#f0e0f2" opacity="1"/><circle cx="12.3" cy="93.0" r="2.3" fill="#c9a0d8" opacity="1"/><circle cx="71.2" cy="53.0" r="1.8" fill="#ffffff" opacity="1"/><circle cx="68.6" cy="94.7" r="2.4" fill="#c9a0d8" opacity="1"/><circle cx="64.2" cy="97.8" r="1.3" fill="#dcc0e4" opacity="1"/><circle cx="23.6" cy="83.6" r="2.3" fill="#c9a0d8" opacity="1"/><circle cx="60.1" cy="60.3" r="2.2" fill="#dcc0e4" opacity="1"/><circle cx="46.9" cy="89.7" r="2.0" fill="#f0e0f2" opacity="1"/><circle cx="43.7" cy="82.4" r="1.8" fill="#c9a0d8" opacity="1"/><circle cx="78.9" cy="61.1" r="1.8" fill="#dcc0e4" opacity="1"/><circle cx="91.1" cy="45.3" r="1.0" fill="#f0e0f2" opacity="1"/><circle cx="97.7" cy="80.8" r="1.0" fill="#e6c8ea" opacity="1"/><circle cx="69.3" cy="76.6" r="2.0" fill="#f0e0f2" opacity="1"/><circle cx="6.6" cy="73.8" r="1.5" fill="#dcc0e4" opacity="1"/><circle cx="86.8" cy="94.5" r="2.3" fill="#f0e0f2" opacity="1"/><circle cx="3.4" cy="96.8" r="2.3" fill="#f0e0f2" opacity="1"/><circle cx="82.5" cy="76.4" r="1.4" fill="#f0e0f2" opacity="1"/><circle cx="13.3" cy="86.7" r="1.9" fill="#c9a0d8" opacity="1"/><circle cx="31.9" cy="63.1" r="1.0" fill="#c9a0d8" opacity="1"/><circle cx="76.0" cy="94.3" r="2.1" fill="#dcc0e4" opacity="1"/><circle cx="50.4" cy="90.5" r="1.9" fill="#f0e0f2" opacity="1"/><circle cx="45.9" cy="87.1" r="1.6" fill="#5a9a50" opacity="1"/><circle cx="62.9" cy="62.7" r="0.8" fill="#78b868" opacity="1"/><circle cx="27.3" cy="88.8" r="0.9" fill="#8ccc70" opacity="1"/><circle cx="40.9" cy="77.1" r="1.6" fill="#78b868" opacity="1"/><circle cx="72.8" cy="81.7" r="1.8" fill="#5a9a50" opacity="1"/><circle cx="25.5" cy="97.5" r="1.1" fill="#78b868" opacity="1"/><circle cx="70.9" cy="65.4" r="1.0" fill="#5a9a50" opacity="1"/><circle cx="59.4" cy="77.1" r="1.8" fill="#5a9a50" opacity="1"/><circle cx="60.7" cy="83.3" r="1.2" fill="#8ccc70" opacity="1"/><circle cx="70.2" cy="95.1" r="1.5" fill="#8ccc70" opacity="1"/><circle cx="67.5" cy="56.1" r="1.0" fill="#8ccc70" opacity="1"/><circle cx="36.7" cy="79.5" r="1.0" fill="#5a9a50" opacity="1"/><circle cx="23.6" cy="75.7" r="1.3" fill="#5a9a50" opacity="1"/><circle cx="58.5" cy="84.1" r="1.1" fill="#8ccc70" opacity="1"/><circle cx="43.0" cy="94.1" r="1.3" fill="#5a9a50" opacity="1"/><circle cx="57.7" cy="62.6" r="1.2" fill="#8ccc70" opacity="1"/><circle cx="39.0" cy="94.8" r="1.0" fill="#78b868" opacity="1"/><circle cx="25.9" cy="89.0" r="1.6" fill="#5a9a50" opacity="1"/><circle cx="24.6" cy="69.7" r="1.3" fill="#78b868" opacity="1"/><circle cx="23.8" cy="98.0" r="1.1" fill="#5a9a50" opacity="1"/><circle cx="74.7" cy="62.4" r="1.5" fill="#78b868" opacity="1"/><circle cx="33.7" cy="99.3" r="1.6" fill="#5a9a50" opacity="1"/><circle cx="15.3" cy="96.0" r="1.1" fill="#8ccc70" opacity="1"/><circle cx="65.2" cy="74.6" r="1.0" fill="#5a9a50" opacity="1"/><circle cx="25.2" cy="88.2" r="0.8" fill="#78b868" opacity="1"/><circle cx="68.8" cy="74.4" r="1.4" fill="#5a9a50" opacity="1"/><circle cx="51.4" cy="93.1" r="1.5" fill="#5a9a50" opacity="1"/><circle cx="67.0" cy="89.8" r="1.5" fill="#78b868" opacity="1"/><circle cx="53.5" cy="83.9" r="1.3" fill="#8ccc70" opacity="1"/><circle cx="25.4" cy="86.5" r="1.7" fill="#78b868" opacity="1"/><circle cx="60.4" cy="87.1" r="1.4" fill="#8ccc70" opacity="1"/><circle cx="64.9" cy="76.7" r="0.8" fill="#8ccc70" opacity="1"/></g></svg></div>
<div class="td" style="left:1158px;top:100px">是</div>
<div class="ob" style="left:1300px;top:94px;width:64px"><svg class="abs" style="left:6px;top:8px" width="14" height="14" viewBox="0 0 14 14"><path d="M7 0.5 V13.5 M0.5 7 H13.5" stroke="#2e9e60" stroke-width="1.5"/></svg><span class="abs" style="left:26px;top:0">查看</span></div>
<div class="ob" style="left:1369px;top:94px;width:97px"><svg class="abs" style="left:6px;top:8px" width="14" height="14" viewBox="0 0 14 14"><path d="M7 0.5 V13.5 M0.5 7 H13.5" stroke="#2e9e60" stroke-width="1.5"/></svg><span class="abs" style="left:26px;top:0">查看评论</span></div>
<div class="ob del" style="left:1471px;top:94px;width:64px"><svg class="abs" style="left:6px;top:7px" width="14" height="16" viewBox="0 0 14 16"><path d="M0.8 3.5 H13.2 M4.5 3.5 L5.5 1.2 H8.5 L9.5 3.5 M2.2 3.5 V14.5 H11.8 V3.5 M5.3 6.5 V11.8 M8.7 6.5 V11.8" fill="none" stroke="#e39aa8" stroke-width="1.1"/></svg><span class="abs" style="left:26px;top:0">删除</span></div>
<div class="abs" style="left:6px;top:221px;width:14px;height:14px;border:1px solid #e3e3e3;border-radius:2px;background:#fff"></div>
<div class="td" style="left:56px;top:215px">2</div>
<div class="td" style="left:106px;top:215px">帖子标题2</div>
<div class="td" style="left:248px;top:215px">用户名2</div>
<div class="td" style="left:390px;top:215px">开放</div>
<svg class="abs" style="left:534px;top:221px" width="13" height="13" viewBox="0 0 13 13"><path d="M2.5 6.5 L10 2.5 M2.5 6.5 L10 10.5" stroke="#333" stroke-width="1.1"/><circle cx="2.5" cy="6.5" r="2.2" fill="#333"/><circle cx="10" cy="2.5" r="2" fill="#333"/><circle cx="10" cy="10.5" r="2" fill="#333"/></svg>
<div class="abs" style="left:558px;top:217px;width:60px;height:20px;border-radius:10px;background:#cbcbcb"></div>
<div class="abs" style="left:559px;top:218px;width:18px;height:18px;border-radius:50%;background:#fff"></div>
<svg class="abs" style="left:630px;top:220px" width="14" height="15" viewBox="0 0 14 15"><path d="M1.5 13.5 L1.2 10 L7.5 1.5 L10.5 3.5 L4.2 12 Z M6.5 3 L9.5 5" fill="none" stroke="#333" stroke-width="1"/><path d="M7 13.5 H13" stroke="#333" stroke-width="1.2"/></svg>
<div class="td" style="left:674px;top:203px;line-height:24px;height:48px;letter-spacing:.55px">2025-01-14 10:0<br>8:36</div>
<div class="td" style="left:816px;top:215px">分类名称2</div>
<div class="abs thumb t2" style="left:958px;top:174px;width:100px;height:100px"><svg width="100" height="100" viewBox="0 0 100 100"><defs><linearGradient id="g2s" x1="0" y1="0" x2="0" y2="1"><stop offset="0" stop-color="#1660d6"/><stop offset=".55" stop-color="#3f8ee6"/><stop offset="1" stop-color="#8cc4ee"/></linearGradient><filter id="f2a" x="-100%" y="-100%" width="300%" height="300%"><feGaussianBlur stdDeviation="2"/></filter><filter id="f2b" x="-100%" y="-100%" width="300%" height="300%"><feGaussianBlur stdDeviation="1"/></filter></defs><rect width="100" height="100" fill="url(#g2s)"/><g filter="url(#f2a)" fill="#f4f8fc"><ellipse cx="8" cy="26" rx="13" ry="7"/><ellipse cx="22" cy="15" rx="8" ry="6"/><ellipse cx="40" cy="10" rx="4" ry="3"/><ellipse cx="55" cy="18" rx="3" ry="3"/><ellipse cx="78" cy="30" rx="13" ry="8"/><ellipse cx="74" cy="42" rx="14" ry="6"/><ellipse cx="28" cy="47" rx="26" ry="7"/><ellipse cx="6" cy="44" rx="8" ry="5"/></g><path d="M0 48 Q6 44 12 50 Q16 42 22 52 Q30 56 36 58 Q44 54 52 56 Q58 50 64 52 Q70 44 76 48 Q82 44 90 48 L100 46 V75 H0Z" fill="#2f8a2c" filter="url(#f2b)"/><g filter="url(#f2b)"><circle cx="51.8" cy="63.2" r="3.7" fill="#246f22" opacity="1"/><circle cx="77.8" cy="57.8" r="3.0" fill="#3e9a36" opacity="1"/><circle cx="3.8" cy="60.9" r="2.3" fill="#55aa40" opacity="1"/><circle cx="51.9" cy="52.0" r="3.1" fill="#55aa40" opacity="1"/><circle cx="71.7" cy="60.2" r="3.3" fill="#246f22" opacity="1"/><circle cx="52.2" cy="58.2" r="3.9" fill="#55aa40" opacity="1"/><circle cx="99.0" cy="53.7" r="3.0" fill="#3e9a36" opacity="1"/><circle cx="72.9" cy="62.3" r="3.3" fill="#246f22" opacity="1"/><circle cx="27.4" cy="58.0" r="2.0" fill="#76b850" opacity="1"/><circle cx="91.5" cy="62.6" r="3.3" fill="#246f22" opacity="1"/><circle cx="10.9" cy="56.1" r="2.8" fill="#55aa40" opacity="1"/><circle cx="99.4" cy="69.2" r="2.9" fill="#55aa40" opacity="1"/><circle cx="12.9" cy="65.5" r="3.6" fill="#55aa40" opacity="1"/><circle cx="46.9" cy="61.2" r="2.5" fill="#55aa40" opacity="1"/><circle cx="35.3" cy="62.8" r="3.6" fill="#76b850" opacity="1"/><circle cx="46.8" cy="55.9" r="3.1" fill="#55aa40" opacity="1"/><circle cx="78.0" cy="59.4" r="3.6" fill="#55aa40" opacity="1"/><circle cx="26.7" cy="57.5" r="2.5" fill="#76b850" opacity="1"/><circle cx="67.9" cy="59.6" r="3.6" fill="#246f22" opacity="1"/><circle cx="35.8" cy="63.1" r="2.6" fill="#76b850" opacity="1"/><circle cx="42.8" cy="62.7" r="3.3" fill="#246f22" opacity="1"/><circle cx="15.3" cy="56.1" r="2.8" fill="#3e9a36" opacity="1"/><circle cx="82.8" cy="68.1" r="3.6" fill="#55aa40" opacity="1"/><circle cx="53.1" cy="56.9" r="3.2" fill="#3e9a36" opacity="1"/><circle cx="21.0" cy="51.4" r="2.6" fill="#3e9a36" opacity="1"/><circle cx="57.8" cy="67.1" r="2.4" fill="#76b850" opacity="1"/><circle cx="34.6" cy="53.1" r="3.8" fill="#55aa40" opacity="1"/><circle cx="61.0" cy="63.8" r="4.0" fill="#3e9a36" opacity="1"/><circle cx="66.8" cy="67.9" r="3.6" fill="#246f22" opacity="1"/><circle cx="19.7" cy="63.9" r="3.1" fill="#76b850" opacity="1"/><circle cx="67.1" cy="52.3" r="2.2" fill="#76b850" opacity="1"/><circle cx="23.4" cy="52.8" r="3.0" fill="#3e9a36" opacity="1"/><circle cx="48.4" cy="68.1" r="3.4" fill="#55aa40" opacity="1"/><circle cx="49.8" cy="60.8" r="3.7" fill="#3e9a36" opacity="1"/><circle cx="16.0" cy="56.4" r="3.4" fill="#76b850" opacity="1"/><circle cx="66.5" cy="66.8" r="2.7" fill="#76b850" opacity="1"/><circle cx="100.0" cy="63.5" r="2.4" fill="#246f22" opacity="1"/><circle cx="63.6" cy="50.6" r="3.2" fill="#246f22" opacity="1"/><circle cx="80.9" cy="51.9" r="3.0" fill="#55aa40" opacity="1"/><circle cx="3.4" cy="64.4" r="3.3" fill="#246f22" opacity="1"/></g><path d="M90 0 H100 V75 Q92 60 94 45 Q88 30 94 15Z" fill="#5aa845" filter="url(#f2b)"/><rect x="0" y="66" width="100" height="34" fill="#7cc250"/><path d="M18 68 Q50 66 100 70 V80 Q50 78 18 80Z" fill="#c4dfa0" filter="url(#f2b)"/><ellipse cx="82" cy="74" rx="18" ry="3.5" fill="#9fd4e0" filter="url(#f2b)"/><rect x="0" y="63" width="16" height="10" fill="#7a5e40" opacity=".85" filter="url(#f2b)"/><rect x="0" y="80" width="100" height="12" fill="#5eb43a"/><g filter="url(#f2b)"><circle cx="9.4" cy="95.2" r="1.5" fill="#6ab848" opacity="1"/><circle cx="55.4" cy="98.8" r="1.4" fill="#e46aa0" opacity="1"/><circle cx="42.2" cy="93.8" r="2.2" fill="#e46aa0" opacity="1"/><circle cx="35.5" cy="92.9" r="1.5" fill="#e46aa0" opacity="1"/><circle cx="87.3" cy="90.8" r="1.3" fill="#ffe8b0" opacity="1"/><circle cx="79.2" cy="90.6" r="1.5" fill="#e46aa0" opacity="1"/><circle cx="12.8" cy="99.6" r="1.1" fill="#ffffff" opacity="1"/><circle cx="39.9" cy="93.8" r="1.6" fill="#6ab848" opacity="1"/><circle cx="5.0" cy="90.2" r="1.0" fill="#f3c0d6" opacity="1"/><circle cx="82.2" cy="92.7" r="2.1" fill="#ffffff" opacity="1"/><circle cx="78.9" cy="98.7" r="1.9" fill="#6ab848" opacity="1"/><circle cx="14.7" cy="95.4" r="2.0" fill="#d8f0c0" opacity="1"/><circle cx="8.3" cy="86.6" r="2.0" fill="#d8f0c0" opacity="1"/><circle cx="76.3" cy="87.4" r="1.3" fill="#ffffff" opacity="1"/><circle cx="42.2" cy="87.4" r="2.4" fill="#ffffff" opacity="1"/><circle cx="36.9" cy="97.5" r="2.2" fill="#6ab848" opacity="1"/><circle cx="71.0" cy="98.1" r="1.3" fill="#ffffff" opacity="1"/><circle cx="31.8" cy="92.0" r="2.0" fill="#ffffff" opacity="1"/><circle cx="49.8" cy="93.3" r="2.2" fill="#ffe8b0" opacity="1"/><circle cx="57.5" cy="98.9" r="1.7" fill="#ffffff" opacity="1"/><circle cx="68.0" cy="94.3" r="2.5" fill="#d8f0c0" opacity="1"/><circle cx="98.1" cy="92.7" r="1.6" fill="#ffffff" opacity="1"/><circle cx="8.3" cy="92.6" r="2.3" fill="#d8f0c0" opacity="1"/><circle cx="1.6" cy="86.1" r="2.0" fill="#ffffff" opacity="1"/><circle cx="98.7" cy="98.0" r="1.3" fill="#ffffff" opacity="1"/><circle cx="12.9" cy="86.2" r="2.1" fill="#f3c0d6" opacity="1"/><circle cx="45.1" cy="96.4" r="2.4" fill="#e46aa0" opacity="1"/><circle cx="77.4" cy="96.0" r="2.3" fill="#d8f0c0" opacity="1"/><circle cx="75.9" cy="90.1" r="1.8" fill="#ffe8b0" opacity="1"/><circle cx="46.1" cy="99.1" r="1.4" fill="#ffffff" opacity="1"/><circle cx="71.7" cy="86.2" r="1.0" fill="#d8f0c0" opacity="1"/><circle cx="68.7" cy="94.7" r="1.6" fill="#e46aa0" opacity="1"/><circle cx="72.9" cy="88.3" r="2.3" fill="#ffe8b0" opacity="1"/><circle cx="60.9" cy="90.4" r="2.4" fill="#d8f0c0" opacity="1"/><circle cx="43.9" cy="95.5" r="1.2" fill="#ffffff" opacity="1"/><circle cx="36.3" cy="95.0" r="1.9" fill="#ffe8b0" opacity="1"/><circle cx="47.7" cy="96.9" r="1.7" fill="#e46aa0" opacity="1"/><circle cx="78.5" cy="93.9" r="1.4" fill="#ffffff" opacity="1"/><circle cx="62.2" cy="95.1" r="2.2" fill="#6ab848" opacity="1"/><circle cx="33.2" cy="94.5" r="2.5" fill="#f3c0d6" opacity="1"/><circle cx="60.1" cy="90.3" r="1.6" fill="#f3c0d6" opacity="1"/><circle cx="37.7" cy="95.6" r="1.9" fill="#f3c0d6" opacity="1"/><circle cx="80.7" cy="90.0" r="1.0" fill="#e46aa0" opacity="1"/><circle cx="26.8" cy="88.2" r="2.4" fill="#ffffff" opacity="1"/><circle cx="28.9" cy="88.0" r="2.3" fill="#6ab848" opacity="1"/><circle cx="14.7" cy="99.7" r="2.2" fill="#6ab848" opacity="1"/><circle cx="68.5" cy="98.8" r="1.5" fill="#ffffff" opacity="1"/><circle cx="54.0" cy="92.8" r="1.6" fill="#d8f0c0" opacity="1"/><circle cx="93.2" cy="89.3" r="1.9" fill="#d8f0c0" opacity="1"/><circle cx="39.5" cy="95.9" r="2.4" fill="#6ab848" opacity="1"/><circle cx="75.1" cy="97.1" r="1.7" fill="#ffffff" opacity="1"/><circle cx="53.6" cy="91.0" r="1.1" fill="#ffe8b0" opacity="1"/><circle cx="58.0" cy="98.6" r="2.3" fill="#6ab848" opacity="1"/><circle cx="32.1" cy="93.1" r="1.3" fill="#f3c0d6" opacity="1"/><circle cx="19.2" cy="88.5" r="2.1" fill="#e46aa0" opacity="1"/><circle cx="57.8" cy="91.0" r="2.2" fill="#f3c0d6" opacity="1"/><circle cx="24.6" cy="98.9" r="1.7" fill="#ffffff" opacity="1"/><circle cx="37.2" cy="92.5" r="1.1" fill="#e46aa0" opacity="1"/><circle cx="59.7" cy="90.8" r="1.8" fill="#ffffff" opacity="1"/><circle cx="9.4" cy="88.9" r="2.3" fill="#6ab848" opacity="1"/><circle cx="48.6" cy="93.9" r="1.4" fill="#e46aa0" opacity="1"/><circle cx="42.6" cy="99.3" r="2.2" fill="#6ab848" opacity="1"/><circle cx="96.3" cy="89.6" r="1.1" fill="#f3c0d6" opacity="1"/><circle cx="99.5" cy="91.3" r="1.0" fill="#ffffff" opacity="1"/><circle cx="55.7" cy="98.2" r="1.7" fill="#ffffff" opacity="1"/><circle cx="86.3" cy="95.0" r="2.4" fill="#d8f0c0" opacity="1"/><circle cx="95.9" cy="89.6" r="1.8" fill="#d8f0c0" opacity="1"/><circle cx="9.0" cy="98.9" r="1.8" fill="#f3c0d6" opacity="1"/><circle cx="44.8" cy="88.2" r="2.4" fill="#d8f0c0" opacity="1"/><circle cx="22.2" cy="86.5" r="1.4" fill="#e46aa0" opacity="1"/></g></svg></div>
<div class="td" style="left:1158px;top:215px">否</div>
<div class="ob" style="left:1300px;top:209px;width:64px"><svg class="abs" style="left:6px;top:8px" width="14" height="14" viewBox="0 0 14 14"><path d="M7 0.5 V13.5 M0.5 7 H13.5" stroke="#2e9e60" stroke-width="1.5"/></svg><span class="abs" style="left:26px;top:0">查看</span></div>
<div class="ob" style="left:1369px;top:209px;width:97px"><svg class="abs" style="left:6px;top:8px" width="14" height="14" viewBox="0 0 14 14"><path d="M7 0.5 V13.5 M0.5 7 H13.5" stroke="#2e9e60" stroke-width="1.5"/></svg><span class="abs" style="left:26px;top:0">查看评论</span></div>
<div class="ob del" style="left:1471px;top:209px;width:64px"><svg class="abs" style="left:6px;top:7px" width="14" height="16" viewBox="0 0 14 16"><path d="M0.8 3.5 H13.2 M4.5 3.5 L5.5 1.2 H8.5 L9.5 3.5 M2.2 3.5 V14.5 H11.8 V3.5 M5.3 6.5 V11.8 M8.7 6.5 V11.8" fill="none" stroke="#e39aa8" stroke-width="1.1"/></svg><span class="abs" style="left:26px;top:0">删除</span></div>
<div class="abs" style="left:6px;top:336px;width:14px;height:14px;border:1px solid #e3e3e3;border-radius:2px;background:#fff"></div>
<div class="td" style="left:56px;top:330px">3</div>
<div class="td" style="left:106px;top:330px">帖子标题3</div>
<div class="td" style="left:248px;top:330px">用户名3</div>
<div class="td" style="left:390px;top:330px">开放</div>
<svg class="abs" style="left:534px;top:336px" width="13" height="13" viewBox="0 0 13 13"><path d="M2.5 6.5 L10 2.5 M2.5 6.5 L10 10.5" stroke="#333" stroke-width="1.1"/><circle cx="2.5" cy="6.5" r="2.2" fill="#333"/><circle cx="10" cy="2.5" r="2" fill="#333"/><circle cx="10" cy="10.5" r="2" fill="#333"/></svg>
<div class="abs" style="left:558px;top:332px;width:60px;height:20px;border-radius:10px;background:#cbcbcb"></div>
<div class="abs" style="left:559px;top:333px;width:18px;height:18px;border-radius:50%;background:#fff"></div>
<svg class="abs" style="left:630px;top:335px" width="14" height="15" viewBox="0 0 14 15"><path d="M1.5 13.5 L1.2 10 L7.5 1.5 L10.5 3.5 L4.2 12 Z M6.5 3 L9.5 5" fill="none" stroke="#333" stroke-width="1"/><path d="M7 13.5 H13" stroke="#333" stroke-width="1.2"/></svg>
<div class="td" style="left:674px;top:318px;line-height:24px;height:48px;letter-spacing:.55px">2025-01-14 10:0<br>8:36</div>
<div class="td" style="left:816px;top:330px">分类名称3</div>
<div class="abs thumb t3" style="left:958px;top:289px;width:100px;height:100px"><svg width="100" height="100" viewBox="0 0 100 100"><defs><radialGradient id="g3s" cx=".5" cy=".5" r=".65"><stop offset="0" stop-color="#38b4e6"/><stop offset=".4" stop-color="#2a70d8"/><stop offset=".75" stop-color="#1a3cb8"/><stop offset="1" stop-color="#0c2080"/></radialGradient><filter id="f3a" x="-100%" y="-100%" width="300%" height="300%"><feGaussianBlur stdDeviation="3"/></filter><filter id="f3b" x="-100%" y="-100%" width="300%" height="300%"><feGaussianBlur stdDeviation=".6"/></filter></defs><rect width="100" height="100" fill="url(#g3s)"/><g filter="url(#f3a)"><ellipse cx="60" cy="42" rx="30" ry="14" fill="#58d0f0" opacity=".55"/><ellipse cx="55" cy="68" rx="16" ry="8" fill="#f0e0c0" opacity=".8"/><ellipse cx="22" cy="48" rx="12" ry="4" fill="#e8f0ff" opacity=".8"/><ellipse cx="88" cy="52" rx="12" ry="6" fill="#f0f4ff" opacity=".8"/><ellipse cx="28" cy="70" rx="14" ry="6" fill="#d8a8b8" opacity=".5"/><ellipse cx="80" cy="75" rx="22" ry="10" fill="#0a2060" opacity=".6"/></g><circle cx="5.9" cy="44.2" r="0.3" fill="#ffffff" opacity="1"/><circle cx="25.8" cy="41.1" r="0.7" fill="#d8ecff" opacity="1"/><circle cx="5.6" cy="11.6" r="0.7" fill="#ffffff" opacity="1"/><circle cx="67.7" cy="23.9" r="0.6" fill="#a8d0ff" opacity="1"/><circle cx="10.5" cy="25.9" r="0.4" fill="#ffffff" opacity="1"/><circle cx="37.5" cy="30.4" r="0.5" fill="#ffffff" opacity="1"/><circle cx="91.4" cy="71.4" r="0.5" fill="#ffffff" opacity="1"/><circle cx="79.9" cy="12.6" r="0.7" fill="#ffffff" opacity="1"/><circle cx="93.4" cy="69.3" r="0.7" fill="#ffffff" opacity="1"/><circle cx="77.8" cy="76.6" r="0.8" fill="#d8ecff" opacity="1"/><circle cx="84.2" cy="50.3" r="0.5" fill="#d8ecff" opacity="1"/><circle cx="32.3" cy="18.7" r="0.4" fill="#d8ecff" opacity="1"/><circle cx="14.3" cy="17.7" r="0.3" fill="#a8d0ff" opacity="1"/><circle cx="45.1" cy="71.1" r="0.5" fill="#ffffff" opacity="1"/><circle cx="26.6" cy="32.9" r="0.4" fill="#d8ecff" opacity="1"/><circle cx="57.1" cy="23.7" r="0.7" fill="#d8ecff" opacity="1"/><circle cx="49.1" cy="25.4" r="0.8" fill="#ffffff" opacity="1"/><circle cx="15.3" cy="41.1" r="0.6" fill="#a8d0ff" opacity="1"/><circle cx="92.5" cy="44.8" r="0.7" fill="#ffffff" opacity="1"/><circle cx="25.8" cy="16.1" r="0.5" fill="#d8ecff" opacity="1"/><circle cx="99.8" cy="74.0" r="0.3" fill="#d8ecff" opacity="1"/><circle cx="41.6" cy="13.0" r="0.7" fill="#d8ecff" opacity="1"/><circle cx="14.4" cy="51.2" r="0.5" fill="#a8d0ff" opacity="1"/><circle cx="34.1" cy="11.2" r="0.3" fill="#a8d0ff" opacity="1"/><circle cx="28.6" cy="28.8" r="0.3" fill="#d8ecff" opacity="1"/><circle cx="21.8" cy="45.7" r="0.4" fill="#ffffff" opacity="1"/><circle cx="52.2" cy="18.4" r="0.4" fill="#a8d0ff" opacity="1"/><circle cx="7.9" cy="7.0" r="0.6" fill="#d8ecff" opacity="1"/><circle cx="76.1" cy="14.0" r="0.4" fill="#a8d0ff" opacity="1"/><circle cx="70.8" cy="64.9" r="0.6" fill="#ffffff" opacity="1"/><circle cx="1.0" cy="55.4" r="0.6" fill="#a8d0ff" opacity="1"/><circle cx="91.6" cy="41.5" r="0.5" fill="#d8ecff" opacity="1"/><circle cx="84.2" cy="69.2" r="0.5" fill="#ffffff" opacity="1"/><circle cx="41.0" cy="61.0" r="0.4" fill="#a8d0ff" opacity="1"/><circle cx="26.6" cy="14.9" r="0.7" fill="#d8ecff" opacity="1"/><circle cx="3.7" cy="56.2" r="0.6" fill="#ffffff" opacity="1"/><circle cx="35.6" cy="74.6" r="0.8" fill="#ffffff" opacity="1"/><circle cx="12.1" cy="57.2" r="0.7" fill="#d8ecff" opacity="1"/><circle cx="77.9" cy="69.4" r="0.6" fill="#ffffff" opacity="1"/><circle cx="29.2" cy="8.6" r="0.7" fill="#d8ecff" opacity="1"/><circle cx="51.3" cy="42.4" r="0.6" fill="#ffffff" opacity="1"/><circle cx="24.4" cy="7.1" r="0.6" fill="#ffffff" opacity="1"/><circle cx="10.3" cy="20.0" r="0.7" fill="#ffffff" opacity="1"/><circle cx="1.9" cy="74.1" r="0.7" fill="#d8ecff" opacity="1"/><circle cx="1.8" cy="48.0" r="0.6" fill="#a8d0ff" opacity="1"/><circle cx="23.8" cy="35.5" r="0.5" fill="#ffffff" opacity="1"/><circle cx="71.7" cy="3.6" r="0.4" fill="#d8ecff" opacity="1"/><circle cx="58.6" cy="60.9" r="0.4" fill="#ffffff" opacity="1"/><circle cx="40.6" cy="11.0" r="0.6" fill="#ffffff" opacity="1"/><circle cx="14.7" cy="45.8" r="0.7" fill="#ffffff" opacity="1"/><circle cx="94.8" cy="1.5" r="0.6" fill="#a8d0ff" opacity="1"/><circle cx="42.0" cy="67.2" r="0.6" fill="#d8ecff" opacity="1"/><circle cx="97.0" cy="4.2" r="0.5" fill="#d8ecff" opacity="1"/><circle cx="24.0" cy="26.8" r="0.5" fill="#a8d0ff" opacity="1"/><circle cx="80.4" cy="73.0" r="0.7" fill="#a8d0ff" opacity="1"/><circle cx="5.4" cy="41.4" r="0.8" fill="#d8ecff" opacity="1"/><circle cx="24.9" cy="33.8" r="0.6" fill="#d8ecff" opacity="1"/><circle cx="10.9" cy="15.0" r="0.5" fill="#ffffff" opacity="1"/><circle cx="50.5" cy="1.7" r="0.4" fill="#d8ecff" opacity="1"/><circle cx="77.7" cy="75.0" r="0.6" fill="#ffffff" opacity="1"/><circle cx="3.4" cy="51.3" r="0.4" fill="#a8d0ff" opacity="1"/><circle cx="62.3" cy="50.3" r="0.7" fill="#ffffff" opacity="1"/><circle cx="62.1" cy="20.0" r="0.6" fill="#d8ecff" opacity="1"/><circle cx="23.7" cy="3.2" r="0.4" fill="#d8ecff" opacity="1"/><circle cx="64.8" cy="9.6" r="0.6" fill="#a8d0ff" opacity="1"/><circle cx="90.1" cy="6.8" r="0.6" fill="#ffffff" opacity="1"/><circle cx="44.0" cy="40.9" r="0.7" fill="#d8ecff" opacity="1"/><circle cx="57.7" cy="21.9" r="0.7" fill="#a8d0ff" opacity="1"/><circle cx="54.6" cy="67.2" r="0.6" fill="#a8d0ff" opacity="1"/><circle cx="22.2" cy="30.9" r="0.6" fill="#d8ecff" opacity="1"/><circle cx="46.1" cy="43.8" r="0.6" fill="#d8ecff" opacity="1"/><circle cx="81.9" cy="2.5" r="0.5" fill="#ffffff" opacity="1"/><circle cx="51.2" cy="30.7" r="0.6" fill="#ffffff" opacity="1"/><circle cx="92.4" cy="13.0" r="0.8" fill="#d8ecff" opacity="1"/><circle cx="55.7" cy="39.3" r="0.4" fill="#ffffff" opacity="1"/><circle cx="29.6" cy="61.8" r="0.4" fill="#ffffff" opacity="1"/><circle cx="60.6" cy="27.8" r="0.6" fill="#a8d0ff" opacity="1"/><circle cx="38.8" cy="35.2" r="0.7" fill="#ffffff" opacity="1"/><circle cx="52.1" cy="79.1" r="0.6" fill="#ffffff" opacity="1"/><circle cx="41.7" cy="53.5" r="0.4" fill="#ffffff" opacity="1"/><circle cx="61.6" cy="68.0" r="0.7" fill="#a8d0ff" opacity="1"/><circle cx="9.5" cy="68.5" r="0.8" fill="#d8ecff" opacity="1"/><circle cx="26.9" cy="50.5" r="0.6" fill="#a8d0ff" opacity="1"/><circle cx="12.7" cy="69.7" r="0.3" fill="#a8d0ff" opacity="1"/><circle cx="58.6" cy="39.8" r="0.8" fill="#a8d0ff" opacity="1"/><circle cx="15.0" cy="68.0" r="0.4" fill="#a8d0ff" opacity="1"/><circle cx="60.7" cy="30.4" r="0.5" fill="#d8ecff" opacity="1"/><circle cx="28.8" cy="28.2" r="0.5" fill="#a8d0ff" opacity="1"/><circle cx="55.5" cy="30.8" r="0.5" fill="#a8d0ff" opacity="1"/><circle cx="85.0" cy="40.0" r="0.5" fill="#ffffff" opacity="1"/><circle cx="53.7" cy="64.2" r="0.5" fill="#d8ecff" opacity="1"/><circle cx="58.2" cy="7.0" r="0.8" fill="#d8ecff" opacity="1"/><circle cx="96.9" cy="48.6" r="0.4" fill="#d8ecff" opacity="1"/><circle cx="20.4" cy="34.1" r="0.8" fill="#ffffff" opacity="1"/><circle cx="2.6" cy="20.5" r="0.7" fill="#d8ecff" opacity="1"/><circle cx="92.0" cy="61.9" r="0.6" fill="#d8ecff" opacity="1"/><circle cx="51.7" cy="41.4" r="0.6" fill="#d8ecff" opacity="1"/><circle cx="46.4" cy="3.3" r="0.6" fill="#d8ecff" opacity="1"/><circle cx="94.8" cy="54.1" r="0.6" fill="#ffffff" opacity="1"/><circle cx="41.0" cy="40.1" r="0.6" fill="#a8d0ff" opacity="1"/><circle cx="15.4" cy="15.1" r="0.5" fill="#d8ecff" opacity="1"/><circle cx="44.0" cy="50.0" r="0.8" fill="#d8ecff" opacity="1"/><circle cx="69.2" cy="59.7" r="0.3" fill="#d8ecff" opacity="1"/><circle cx="31.8" cy="78.3" r="0.7" fill="#a8d0ff" opacity="1"/><circle cx="17.6" cy="52.5" r="0.4" fill="#d8ecff" opacity="1"/><circle cx="82.1" cy="79.2" r="0.7" fill="#d8ecff" opacity="1"/><circle cx="63.1" cy="41.9" r="0.7" fill="#ffffff" opacity="1"/><circle cx="50.5" cy="15.0" r="0.4" fill="#a8d0ff" opacity="1"/><circle cx="56.5" cy="8.5" r="0.6" fill="#a8d0ff" opacity="1"/><circle cx="63.7" cy="3.4" r="0.5" fill="#ffffff" opacity="1"/><circle cx="12" cy="2.5" r="1.5" fill="#fff" filter="url(#f3b)"/><circle cx="80" cy="22" r="2" fill="#fff" filter="url(#f3b)"/><g filter="url(#f3b)"><path d="M0 72 Q15 74 25 86 L100 88 V100 H0Z" fill="#070a1c"/><path d="M43 30 V88" stroke="#0a1020" stroke-width="1.6"/><path d="M22 86 L43 40" stroke="#0a1020" stroke-width="1.3"/><path d="M32 88 L40 72" stroke="#0a1020" stroke-width="1"/><path d="M43 36 L49 36 L47 33Z" fill="#0a1020"/></g></svg></div>
<div class="td" style="left:1158px;top:330px">否</div>
<div class="ob" style="left:1300px;top:324px;width:64px"><svg class="abs" style="left:6px;top:8px" width="14" height="14" viewBox="0 0 14 14"><path d="M7 0.5 V13.5 M0.5 7 H13.5" stroke="#2e9e60" stroke-width="1.5"/></svg><span class="abs" style="left:26px;top:0">查看</span></div>
<div class="ob" style="left:1369px;top:324px;width:97px"><svg class="abs" style="left:6px;top:8px" width="14" height="14" viewBox="0 0 14 14"><path d="M7 0.5 V13.5 M0.5 7 H13.5" stroke="#2e9e60" stroke-width="1.5"/></svg><span class="abs" style="left:26px;top:0">查看评论</span></div>
<div class="ob del" style="left:1471px;top:324px;width:64px"><svg class="abs" style="left:6px;top:7px" width="14" height="16" viewBox="0 0 14 16"><path d="M0.8 3.5 H13.2 M4.5 3.5 L5.5 1.2 H8.5 L9.5 3.5 M2.2 3.5 V14.5 H11.8 V3.5 M5.3 6.5 V11.8 M8.7 6.5 V11.8" fill="none" stroke="#e39aa8" stroke-width="1.1"/></svg><span class="abs" style="left:26px;top:0">删除</span></div>
<div class="abs" style="left:6px;top:451px;width:14px;height:14px;border:1px solid #e3e3e3;border-radius:2px;background:#fff"></div>
<div class="td" style="left:56px;top:445px">4</div>
<div class="td" style="left:106px;top:445px">帖子标题4</div>
<div class="td" style="left:248px;top:445px">用户名4</div>
<div class="td" style="left:390px;top:445px">开放</div>
<svg class="abs" style="left:534px;top:451px" width="13" height="13" viewBox="0 0 13 13"><path d="M2.5 6.5 L10 2.5 M2.5 6.5 L10 10.5" stroke="#333" stroke-width="1.1"/><circle cx="2.5" cy="6.5" r="2.2" fill="#333"/><circle cx="10" cy="2.5" r="2" fill="#333"/><circle cx="10" cy="10.5" r="2" fill="#333"/></svg>
<div class="abs" style="left:558px;top:447px;width:60px;height:20px;border-radius:10px;background:#cbcbcb"></div>
<div class="abs" style="left:559px;top:448px;width:18px;height:18px;border-radius:50%;background:#fff"></div>
<svg class="abs" style="left:630px;top:450px" width="14" height="15" viewBox="0 0 14 15"><path d="M1.5 13.5 L1.2 10 L7.5 1.5 L10.5 3.5 L4.2 12 Z M6.5 3 L9.5 5" fill="none" stroke="#333" stroke-width="1"/><path d="M7 13.5 H13" stroke="#333" stroke-width="1.2"/></svg>
<div class="td" style="left:674px;top:433px;line-height:24px;height:48px;letter-spacing:.55px">2025-01-14 10:0<br>8:36</div>
<div class="td" style="left:816px;top:445px">分类名称4</div>
<div class="abs thumb t4" style="left:958px;top:404px;width:100px;height:100px"><svg width="100" height="100" viewBox="0 0 100 100"><defs><linearGradient id="g4s" x1="0" y1="0" x2="0" y2="1"><stop offset="0" stop-color="#4a3c44"/><stop offset=".3" stop-color="#7a4a38"/><stop offset=".5" stop-color="#d87428"/><stop offset=".65" stop-color="#f59a30"/><stop offset=".8" stop-color="#c86018"/><stop offset=".95" stop-color="#40200c"/><stop offset="1" stop-color="#1a0c06"/></linearGradient><filter id="f4a" x="-100%" y="-100%" width="300%" height="300%"><feGaussianBlur stdDeviation="3"/></filter><filter id="f4b" x="-100%" y="-100%" width="300%" height="300%"><feGaussianBlur stdDeviation=".5"/></filter></defs><rect width="100" height="100" fill="url(#g4s)"/><ellipse cx="88" cy="15" rx="14" ry="10" fill="#8898a8" opacity=".6" filter="url(#f4a)"/><ellipse cx="52" cy="62" rx="14" ry="7" fill="#fff0b0" filter="url(#f4a)"/><ellipse cx="52" cy="63" rx="6" ry="3" fill="#fffbe0" filter="url(#f4b)"/><rect x="47" y="78" width="8" height="16" fill="#ffd070" opacity=".8" filter="url(#f4a)"/><g fill="#150a05" filter="url(#f4b)"><rect x="0" y="0" width="4" height="100"/><path d="M0 5 Q25 10 40 35 Q20 22 0 20Z"/><path d="M0 25 Q30 30 52 42 Q25 42 0 40Z"/><path d="M2 40 Q30 50 45 80 Q25 58 0 55Z"/><path d="M0 0 H20 Q12 15 0 25Z"/><path d="M68 95 Q66 70 70 48 L73 48 Q70 70 72 95Z"/><path d="M70 48 Q55 20 58 0 Q66 25 72 46Z"/><path d="M71 46 Q80 15 95 10 Q82 30 73 48Z"/><path d="M71 46 Q90 35 100 45 Q86 42 73 50Z"/><path d="M71 46 Q40 30 20 38 Q45 32 70 50Z"/><path d="M71 48 Q62 58 60 68 Q66 56 73 50Z"/><path d="M72 48 Q85 55 92 65 Q82 52 73 48Z"/><rect x="96" y="30" width="4" height="70"/><path d="M0 0 H60 Q40 8 30 18 Q15 25 0 35Z" opacity=".85"/><path d="M40 0 H100 V8 Q85 15 75 30 Q60 12 40 0Z" opacity=".7"/><path d="M75 35 Q90 40 100 60 V30 Q90 28 75 35Z" opacity=".8"/><rect x="24" y="86" width="17" height="4"/><rect x="0" y="94" width="100" height="6"/></g></svg></div>
<div class="td" style="left:1158px;top:445px">否</div>
<div class="ob" style="left:1300px;top:439px;width:64px"><svg class="abs" style="left:6px;top:8px" width="14" height="14" viewBox="0 0 14 14"><path d="M7 0.5 V13.5 M0.5 7 H13.5" stroke="#2e9e60" stroke-width="1.5"/></svg><span class="abs" style="left:26px;top:0">查看</span></div>
<div class="ob" style="left:1369px;top:439px;width:97px"><svg class="abs" style="left:6px;top:8px" width="14" height="14" viewBox="0 0 14 14"><path d="M7 0.5 V13.5 M0.5 7 H13.5" stroke="#2e9e60" stroke-width="1.5"/></svg><span class="abs" style="left:26px;top:0">查看评论</span></div>
<div class="ob del" style="left:1471px;top:439px;width:64px"><svg class="abs" style="left:6px;top:7px" width="14" height="16" viewBox="0 0 14 16"><path d="M0.8 3.5 H13.2 M4.5 3.5 L5.5 1.2 H8.5 L9.5 3.5 M2.2 3.5 V14.5 H11.8 V3.5 M5.3 6.5 V11.8 M8.7 6.5 V11.8" fill="none" stroke="#e39aa8" stroke-width="1.1"/></svg><span class="abs" style="left:26px;top:0">删除</span></div>
<div class="abs" style="left:6px;top:566px;width:14px;height:14px;border:1px solid #e3e3e3;border-radius:2px;background:#fff"></div>
<div class="td" style="left:56px;top:560px">5</div>
<div class="td" style="left:106px;top:560px">帖子标题5</div>
<div class="td" style="left:248px;top:560px">用户名5</div>
<div class="td" style="left:390px;top:560px">开放</div>
<svg class="abs" style="left:534px;top:566px" width="13" height="13" viewBox="0 0 13 13"><path d="M2.5 6.5 L10 2.5 M2.5 6.5 L10 10.5" stroke="#333" stroke-width="1.1"/><circle cx="2.5" cy="6.5" r="2.2" fill="#333"/><circle cx="10" cy="2.5" r="2" fill="#333"/><circle cx="10" cy="10.5" r="2" fill="#333"/></svg>
<div class="abs" style="left:558px;top:562px;width:60px;height:20px;border-radius:10px;background:#cbcbcb"></div>
<div class="abs" style="left:559px;top:563px;width:18px;height:18px;border-radius:50%;background:#fff"></div>
<svg class="abs" style="left:630px;top:565px" width="14" height="15" viewBox="0 0 14 15"><path d="M1.5 13.5 L1.2 10 L7.5 1.5 L10.5 3.5 L4.2 12 Z M6.5 3 L9.5 5" fill="none" stroke="#333" stroke-width="1"/><path d="M7 13.5 H13" stroke="#333" stroke-width="1.2"/></svg>
<div class="td" style="left:674px;top:548px;line-height:24px;height:48px;letter-spacing:.55px">2025-01-14 10:0<br>8:36</div>
<div class="td" style="left:816px;top:560px">分类名称5</div>
<div class="abs thumb t5" style="left:958px;top:519px;width:100px;height:100px"><svg width="100" height="100" viewBox="0 0 100 100"><defs><filter id="f5" x="-100%" y="-100%" width="300%" height="300%"><feGaussianBlur stdDeviation=".7"/></filter></defs><rect width="100" height="100" fill="#f2f2f4"/><g filter="url(#f5)"><rect x="0" y="0" width="16" height="66" fill="#e6e4ee"/><rect x="16" y="0" width="15" height="66" fill="#c4b294"/><rect x="30" y="0" width="3.5" height="66" fill="#2a241e"/><rect x="33" y="0" width="17" height="66" fill="#d2bd96"/><rect x="49" y="0" width="3" height="66" fill="#1e1a16"/><rect x="52" y="0" width="18" height="66" fill="#cbb591"/><rect x="69" y="0" width="3" height="66" fill="#221e18"/><rect x="72" y="0" width="10" height="46" fill="#b8a486"/><rect x="81" y="0" width="2.5" height="46" fill="#221e18"/><rect x="83" y="0" width="13" height="46" fill="#b09474"/><rect x="96" y="0" width="4" height="46" fill="#1a1612"/><path d="M70 42 L100 46 V85 L70 66Z" fill="#e9dcc0"/><path d="M70 46 L100 50 M70 50 L100 55 M70 54 L100 60 M70 58 L100 65 M70 62 L100 70 M70 66 L100 76 M72 70 L100 80" stroke="#a8987a" stroke-width="1.1" fill="none"/><path d="M0 62 L6 58 L14 66 L14 90 L0 92Z" fill="#2a2a2a"/><ellipse cx="26" cy="76" rx="13" ry="8" fill="none" stroke="#151515" stroke-width="2.2"/><ellipse cx="58" cy="73" rx="12" ry="6.5" fill="none" stroke="#151515" stroke-width="2.2"/><path d="M39 72 Q44 66 47 72" stroke="#151515" stroke-width="2" fill="none"/><path d="M8 86 L40 82 L60 80" stroke="#555" stroke-width="1.5" opacity=".5"/></g></svg></div>
<div class="td" style="left:1158px;top:560px">否</div>
<div class="ob" style="left:1300px;top:554px;width:64px"><svg class="abs" style="left:6px;top:8px" width="14" height="14" viewBox="0 0 14 14"><path d="M7 0.5 V13.5 M0.5 7 H13.5" stroke="#2e9e60" stroke-width="1.5"/></svg><span class="abs" style="left:26px;top:0">查看</span></div>
<div class="ob" style="left:1369px;top:554px;width:97px"><svg class="abs" style="left:6px;top:8px" width="14" height="14" viewBox="0 0 14 14"><path d="M7 0.5 V13.5 M0.5 7 H13.5" stroke="#2e9e60" stroke-width="1.5"/></svg><span class="abs" style="left:26px;top:0">查看评论</span></div>
<div class="ob del" style="left:1471px;top:554px;width:64px"><svg class="abs" style="left:6px;top:7px" width="14" height="16" viewBox="0 0 14 16"><path d="M0.8 3.5 H13.2 M4.5 3.5 L5.5 1.2 H8.5 L9.5 3.5 M2.2 3.5 V14.5 H11.8 V3.5 M5.3 6.5 V11.8 M8.7 6.5 V11.8" fill="none" stroke="#e39aa8" stroke-width="1.1"/></svg><span class="abs" style="left:26px;top:0">删除</span></div>
<div class="td" style="left:674px;top:662px;line-height:24px;height:48px;letter-spacing:.55px">2025-01-14 10:0<br>8:36</div>
<div class="abs thumb t6" style="left:958px;top:634px;width:100px;height:100px"><svg width="100" height="100" viewBox="0 0 100 100"><defs><filter id="f6" x="-100%" y="-100%" width="300%" height="300%"><feGaussianBlur stdDeviation="1.5"/></filter><linearGradient id="g6" x1="0" y1="0" x2="0" y2="1"><stop offset="0" stop-color="#b8cce0"/><stop offset="1" stop-color="#d0dae6"/></linearGradient></defs><rect width="100" height="100" fill="url(#g6)"/><g filter="url(#f6)"><ellipse cx="25" cy="8" rx="8" ry="3" fill="#4a90d8"/><ellipse cx="80" cy="5" rx="7" ry="3" fill="#4a90d8"/><ellipse cx="45" cy="18" rx="30" ry="8" fill="#e8eef4"/><ellipse cx="15" cy="28" rx="20" ry="6" fill="#dde6ee"/><ellipse cx="70" cy="30" rx="18" ry="6" fill="#f4f6f8"/></g><path d="M38 40 Q70 22 100 14 V100 H38Z" fill="#98aa48"/><path d="M55 36 Q78 24 100 18 V28 Q78 34 55 40Z" fill="#b4c070"/></svg></div>
</div>
<!--/TABLE-->
<div class="abs" style="left:1899px;top:2px;width:17px;height:928px;background:#f1f1f1"></div>
<div class="abs" style="left:1901px;top:19px;width:13px;height:575px;background:#c1c1c1"></div>
<svg class="abs" style="left:1903px;top:8px" width="9" height="6" viewBox="0 0 9 6"><path d="M4.5 0.5 L8.5 5 H0.5Z" fill="#a3a3a3"/></svg>
<svg class="abs" style="left:1903px;top:919px" width="9" height="6" viewBox="0 0 9 6"><path d="M4.5 5.5 L8.5 1 H0.5Z" fill="#505050"/></svg>
<svg class="abs" style="left:651px;top:573px" width="15" height="22" viewBox="0 0 15 22"><path d="M1.5 1.2 V17.5 L5.3 13.8 L8.2 20 L10.6 19 L7.8 13 H13 Z" fill="#fff" stroke="#000" stroke-width="1.05" stroke-linejoin="round"/></svg>
<div class="abs frame-b"></div>
<div class="abs" style="left:916px;top:0;width:58px;height:2px;background:#3a8ee8"></div>

</body></html>
